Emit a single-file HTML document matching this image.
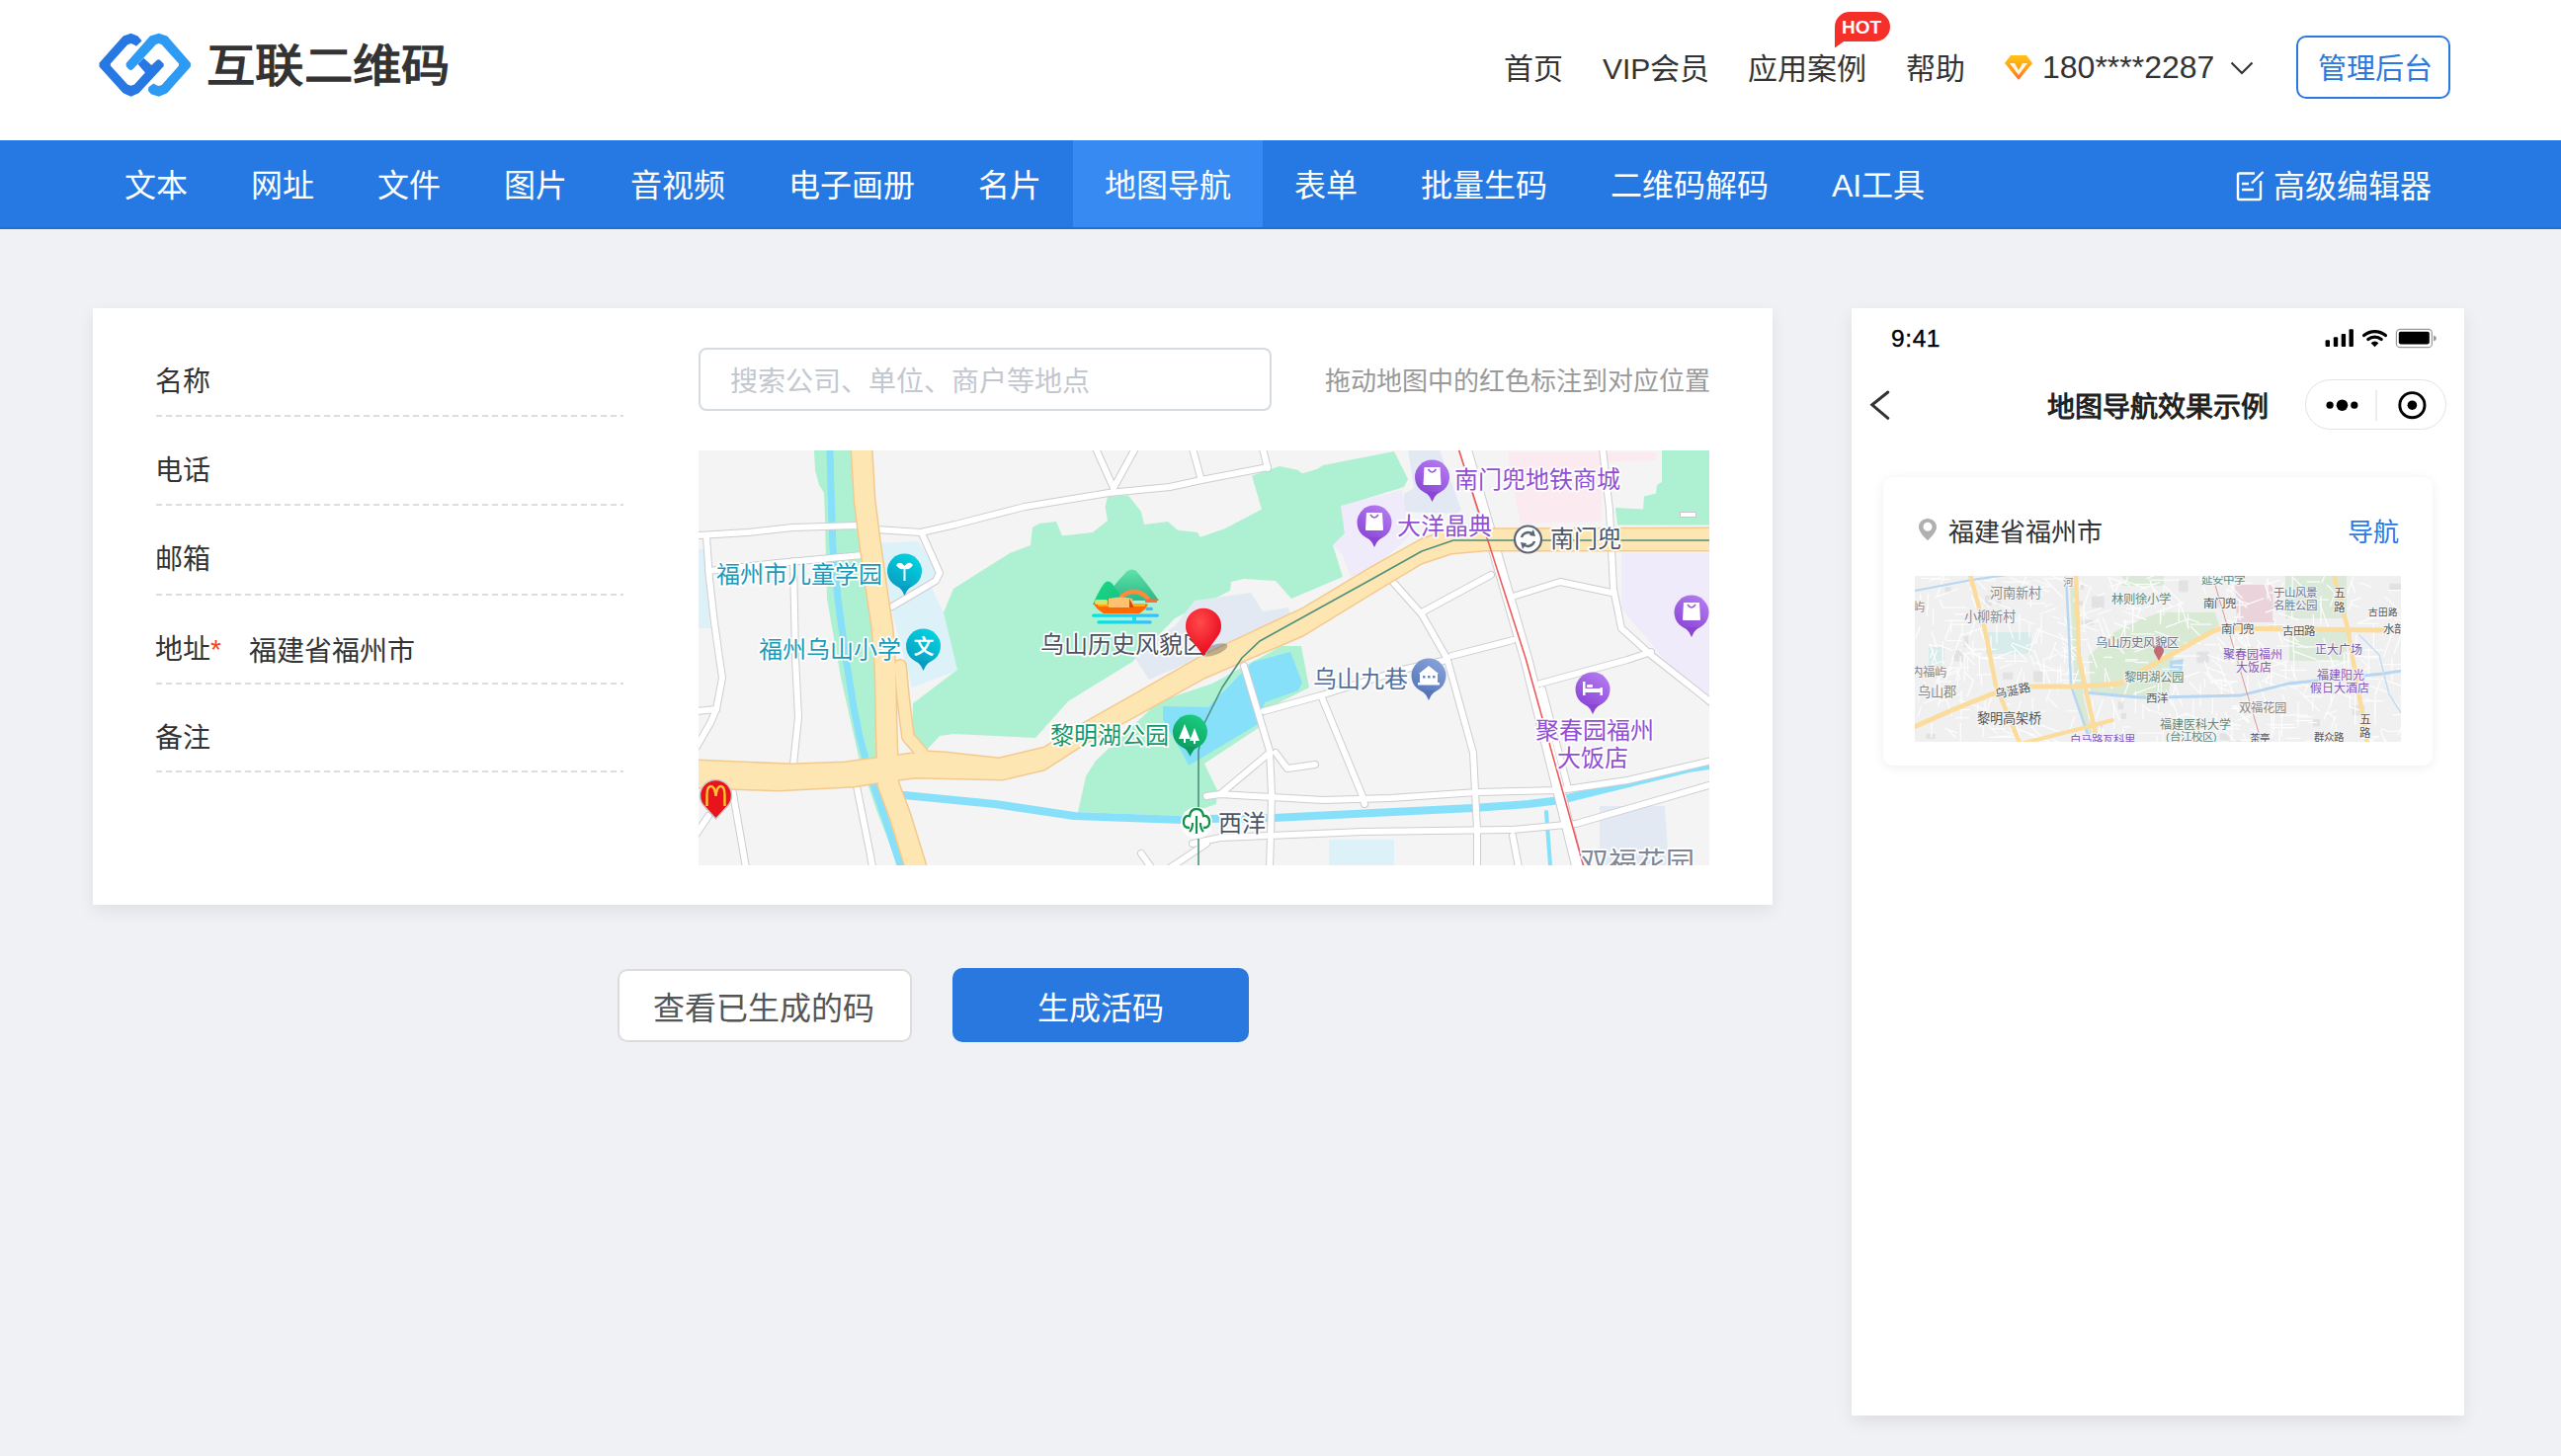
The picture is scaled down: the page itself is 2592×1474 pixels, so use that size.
<!DOCTYPE html>
<html lang="zh-CN">
<head>
<meta charset="utf-8">
<style>
*{margin:0;padding:0;box-sizing:border-box}
html,body{width:2592px;height:1474px;overflow:hidden}
body{background:#f0f1f4;font-family:"Liberation Sans",sans-serif;color:#333;position:relative}
.a{position:absolute;white-space:nowrap;line-height:1}
#hdr{position:absolute;left:0;top:0;width:2592px;height:142px;background:#fff}
#nav{position:absolute;left:0;top:142px;width:2592px;height:90px;background:#2679e2;border-bottom:2px solid #1f6fd8;box-sizing:content-box;height:88px}
.ni{position:absolute;top:0;height:88px;line-height:93px;font-size:32px;color:#fff;padding:0 32px}
.ni.on{background:#368af2}
.tn{font-size:30px;color:#333;top:55px}
#card{position:absolute;left:94px;top:312px;width:1700px;height:604px;background:#fff;box-shadow:0 6px 16px rgba(0,0,0,0.07)}
.lbl{font-size:28px;color:#333}
.dl{position:absolute;left:158px;width:473px;height:2px;background-image:linear-gradient(to right,#dcdcdc 0,#dcdcdc 6px,transparent 6px);background-size:10px 2px}
#phone{position:absolute;left:1874px;top:312px;width:620px;height:1121px;background:#fff;box-shadow:0 6px 16px rgba(0,0,0,0.08)}
</style>
</head>
<body>
<div id="hdr">
  <svg class="a" style="left:96px;top:30px" width="102" height="72" viewBox="0 0 2063 1456">
    <path fill="#2878e3" d="M940,200 L880,130 L740,75 L580,130 L90,680 L90,760 L580,1300 L740,1370 L900,1300 L1410,750 L1410,700 L1320,610 L1280,615 L1160,730 L1000,580 L880,710 L1030,880 L810,1120 L740,1150 L670,1120 L320,740 L320,700 L670,310 L740,285 L800,310 L850,340 L960,230 Z"/>
    <path fill="#2d9af3" d="M1100,1180 L1200,1100 L1260,1140 L1310,1155 L1370,1130 L1720,740 L1720,700 L1370,310 L1310,285 L1250,305 L1000,575 L780,810 L740,835 L690,810 L640,750 L640,690 L1130,130 L1310,75 L1480,130 L1960,680 L1960,760 L1480,1300 L1310,1370 L1150,1320 L1090,1250 Z"/>
  </svg>
  <div class="a" style="left:209px;top:45px;font-size:45px;font-weight:bold;color:#333;transform:scaleX(1.095);transform-origin:0 0">互联二维码</div>

  <div class="a tn" style="left:1522px">首页</div>
  <div class="a tn" style="left:1622px">VIP会员</div>
  <div class="a tn" style="left:1769px">应用案例</div>
  <svg class="a" style="left:1857px;top:12px" width="56" height="37" viewBox="0 0 56 37">
    <path fill="#f5302a" d="M0,15 A15,15 0 0 1 15,0 H41 A15,15 0 0 1 56,15 A15,15 0 0 1 41,30 H9 L0,36.5 Z"/>
  </svg>
  <div class="a" style="left:1864px;top:18px;font-size:19px;color:#fff;font-weight:bold">HOT</div>
  <div class="a tn" style="left:1929px">帮助</div>
  <svg class="a" style="left:2029px;top:56px" width="28" height="26" viewBox="0 0 28 26">
    <defs><linearGradient id="gd" x1="0" y1="0" x2="0" y2="1"><stop offset="0" stop-color="#ffc21a"/><stop offset="0.6" stop-color="#ff9a10"/><stop offset="1" stop-color="#ff6a2a"/></linearGradient></defs>
    <path fill="url(#gd)" d="M6,0 H22 L28,8 L14,25 L0,8 Z"/>
    <path fill="#fff" opacity="0.9" d="M5,8 H10 L14,15 L18,8 H23 L14,20 Z"/>
  </svg>
  <div class="a" style="left:2067px;top:52px;font-size:32px;color:#333">180****2287</div>
  <svg class="a" style="left:2257px;top:62px" width="24" height="14" viewBox="0 0 24 14">
    <path d="M1.5,1.5 L12,12 L22.5,1.5" fill="none" stroke="#333" stroke-width="2.2"/>
  </svg>
  <div class="a" style="left:2324px;top:36px;width:156px;height:64px;border:2px solid #2a78e0;border-radius:10px"></div>
  <div class="a" style="left:2346px;top:56px;font-size:29px;color:#2a78e0">管理后台</div>
</div>

<div id="nav">
  <div class="ni a" style="left:94px">文本</div>
  <div class="ni a" style="left:222px">网址</div>
  <div class="ni a" style="left:350px">文件</div>
  <div class="ni a" style="left:478px">图片</div>
  <div class="ni a" style="left:606px">音视频</div>
  <div class="ni a" style="left:766px">电子画册</div>
  <div class="ni a" style="left:958px">名片</div>
  <div class="ni a on" style="left:1086px">地图导航</div>
  <div class="ni a" style="left:1278px">表单</div>
  <div class="ni a" style="left:1406px">批量生码</div>
  <div class="ni a" style="left:1598px">二维码解码</div>
  <div class="ni a" style="left:1822px">AI工具</div>
  <svg class="a" style="left:2262px;top:30px" width="30" height="32" viewBox="0 0 30 32">
    <path d="M20,3.5 H4.5 Q3,3.5 3,5 V28.5 Q3,30 4.5,30 H24.5 Q26,30 26,28.5 V11" fill="none" stroke="#fff" stroke-width="2.4"/>
    <path d="M17,13.5 L28.5,2" fill="none" stroke="#fff" stroke-width="2.4"/>
    <path d="M7,14 H14 M7,20 H19" fill="none" stroke="#fff" stroke-width="2.4"/>
  </svg>
  <div class="a" style="left:2301px;top:31px;font-size:32px;color:#fff">高级编辑器</div>
</div>

<div id="card"></div>
<!-- form -->
<div class="a lbl" style="left:157px;top:373px">名称</div>
<div class="dl" style="top:420px"></div>
<div class="a lbl" style="left:157px;top:463px">电话</div>
<div class="dl" style="top:510px"></div>
<div class="a lbl" style="left:157px;top:553px">邮箱</div>
<div class="dl" style="top:601px"></div>
<div class="a lbl" style="left:157px;top:644px">地址<span style="color:#f0441f">*</span></div>
<div class="a lbl" style="left:252px;top:646px">福建省福州市</div>
<div class="dl" style="top:691px"></div>
<div class="a lbl" style="left:157px;top:734px">备注</div>
<div class="dl" style="top:780px"></div>

<div class="a" style="left:707px;top:352px;width:580px;height:64px;border:2px solid #d6dae1;border-radius:8px;background:#fff"></div>
<div class="a" style="left:739px;top:373px;font-size:28px;color:#c3c7cf">搜索公司、单位、商户等地点</div>
<div class="a" style="left:1341px;top:373px;font-size:26px;color:#999">拖动地图中的红色标注到对应位置</div>

<div id="map" class="a" style="left:707px;top:456px;width:1023px;height:420px;background:#f4f4f4;overflow:hidden">
<svg width="1023" height="420" viewBox="0 0 1023 420" style="position:absolute;left:0;top:0">
<rect width="1023" height="420" fill="#f4f4f4"/>
<polygon points="0,100 6,100 12,180 0,180" fill="#dcf2f8" />
<polygon points="117,0 172,0 186,150 200,330 225,420 202,420 180,364 162,310 144,230 130,150 128,70 127,43 122,35 118,20" fill="#aef0d2" />
<polygon points="183,94 222,92 244,124 236,140 248,164 264,222 216,240 196,164" fill="#dcf2f8" />
<polygon points="258,140 315,104 336,96 338,78 345,74 362,72 368,86.5 399,83 414,71 411.5,57 414,47 435,45.5 448,62 451,75 475,72 485,80.7 505,83 507.5,87.7 532,79.5 570,59.6 560,25.6 588,16 606,19.8 611,23.3 626,19 632,15 704,1 718,29 714,37 652,56 654,84 642,96 652,128 600,150 584,132 552,130 539,133 538,142 482,170 439,214 374,254 341,291 258,287 244,289 232,302 216,304 217,256 262,222 248,164" fill="#aef0d2" />
<polygon points="439,206 482,178 502,152 559,144 571,163 597,159 600,170 456,232" fill="#e3e9f3" />
<polygon points="718,0 750,0 772,60 768,64 714,62 714,44 724,38" fill="#e3e9f3" />
<polygon points="650,56 712,40 720,86 684,120 660,128 652,106 642,96 654,84" fill="#efebfa" />
<polygon points="820,2 970,2 968,10 914,12 914,72 832,74 820,16" fill="#fbeaf0" />
<polygon points="975,0 1024,0 1024,75.4 930,75.4 928,58 956,59.4 957,46.5 969,43.5 970,35 975,32" fill="#aef0d2" />
<rect x="993.5" y="62.5" width="16" height="5" fill="#fff" stroke="#c8c8cc" stroke-width="1"/>
<polygon points="934,104 1024,104 1024,262 978,212 934,160" fill="#efebfa" />
<polygon points="912,360 978,360 982,420 912,420" fill="#e3e9f3" />
<polygon points="638,394 704,394 704,420 638,420" fill="#dcf2f8" />
<polygon points="402,314 466,254 520,236 590,198 610,198 618,240 574,262 568,280 512,317 525,344 524,358 490,370 384,366 392,330" fill="#aef0d2" />
<polygon points="470,259 516,260 549,226 561,214 599,204 611,235 607,243 573,255 568,276 496,319 490,307 470,273" fill="#86e0fa" />
<polyline points="133,0 134,40 136,100 141,150 149,210 157,260 163,290 174,330 188,370 204,420" fill="none" stroke="#86e0fa" stroke-width="7" stroke-linejoin="round" stroke-linecap="round" />
<polyline points="208,349 300,358 380,370 490,374 512,373 582,372 784,362 840,358 872,354 1002,322 1030,318" fill="none" stroke="#86e0fa" stroke-width="8" stroke-linejoin="round" stroke-linecap="round" />
<polyline points="858,366 862,420" fill="none" stroke="#86e0fa" stroke-width="4" stroke-linejoin="round" stroke-linecap="round" />
<polyline points="0,86 50,83 95,78 160,76 180,80 225,83 260,75 330,57 415,43 477,37 509,30 576,17" fill="none" stroke="#cdcdd2" stroke-width="8" stroke-linejoin="round" stroke-linecap="round" />
<polyline points="571,-2 576,18" fill="none" stroke="#cdcdd2" stroke-width="8" stroke-linejoin="round" stroke-linecap="round" />
<polyline points="402,-2 420,38" fill="none" stroke="#cdcdd2" stroke-width="8" stroke-linejoin="round" stroke-linecap="round" />
<polyline points="442,-2 420,38" fill="none" stroke="#cdcdd2" stroke-width="8" stroke-linejoin="round" stroke-linecap="round" />
<polyline points="500,-2 508,27" fill="none" stroke="#cdcdd2" stroke-width="8" stroke-linejoin="round" stroke-linecap="round" />
<polyline points="226,84 244,124 240,132 196,158" fill="none" stroke="#cdcdd2" stroke-width="8" stroke-linejoin="round" stroke-linecap="round" />
<polyline points="8,88 11,130 16,174 21,210 24,230 18,262 12,276 -2,300" fill="none" stroke="#cdcdd2" stroke-width="8" stroke-linejoin="round" stroke-linecap="round" />
<polyline points="-2,264 18,262" fill="none" stroke="#cdcdd2" stroke-width="8" stroke-linejoin="round" stroke-linecap="round" />
<polyline points="96,112 98,210 101,270 96,318" fill="none" stroke="#cdcdd2" stroke-width="8" stroke-linejoin="round" stroke-linecap="round" />
<polyline points="10,122 80,114 166,106" fill="none" stroke="#cdcdd2" stroke-width="8" stroke-linejoin="round" stroke-linecap="round" />
<polyline points="-2,388 10,370" fill="none" stroke="#cdcdd2" stroke-width="8" stroke-linejoin="round" stroke-linecap="round" />
<polyline points="34,342 48,422" fill="none" stroke="#cdcdd2" stroke-width="8" stroke-linejoin="round" stroke-linecap="round" />
<polyline points="160,340 174,410 176,422" fill="none" stroke="#cdcdd2" stroke-width="8" stroke-linejoin="round" stroke-linecap="round" />
<polyline points="448,408 458,422" fill="none" stroke="#cdcdd2" stroke-width="8" stroke-linejoin="round" stroke-linecap="round" />
<polyline points="478,422 514,398" fill="none" stroke="#cdcdd2" stroke-width="8" stroke-linejoin="round" stroke-linecap="round" />
<polyline points="552,218 578,304 580,348 579,392 578,422" fill="none" stroke="#cdcdd2" stroke-width="8" stroke-linejoin="round" stroke-linecap="round" />
<polyline points="572,264 630,248 712,222 758,212" fill="none" stroke="#cdcdd2" stroke-width="8" stroke-linejoin="round" stroke-linecap="round" />
<polyline points="630,248 672,350 674,358" fill="none" stroke="#cdcdd2" stroke-width="8" stroke-linejoin="round" stroke-linecap="round" />
<polyline points="758,212 784,306 788,384 788,422" fill="none" stroke="#cdcdd2" stroke-width="8" stroke-linejoin="round" stroke-linecap="round" />
<polyline points="514,350 528,348 632,354 700,352 788,346 872,344 940,334 1026,314" fill="none" stroke="#cdcdd2" stroke-width="8" stroke-linejoin="round" stroke-linecap="round" />
<polyline points="500,398 528,392 578,390 672,386 824,384 888,378 1026,338" fill="none" stroke="#cdcdd2" stroke-width="8" stroke-linejoin="round" stroke-linecap="round" />
<polyline points="528,348 578,306" fill="none" stroke="#cdcdd2" stroke-width="8" stroke-linejoin="round" stroke-linecap="round" />
<polyline points="584,306 596,322 624,318" fill="none" stroke="#cdcdd2" stroke-width="8" stroke-linejoin="round" stroke-linecap="round" />
<polyline points="852,236 940,212 964,204" fill="none" stroke="#cdcdd2" stroke-width="8" stroke-linejoin="round" stroke-linecap="round" />
<polyline points="854,242 880,342" fill="none" stroke="#cdcdd2" stroke-width="8" stroke-linejoin="round" stroke-linecap="round" />
<polyline points="824,390 830,422" fill="none" stroke="#cdcdd2" stroke-width="8" stroke-linejoin="round" stroke-linecap="round" />
<polyline points="915,-2 922,60 926,140 934,180 964,207 1026,256" fill="none" stroke="#cdcdd2" stroke-width="8" stroke-linejoin="round" stroke-linecap="round" />
<polyline points="700,130 732,166 756,208" fill="none" stroke="#cdcdd2" stroke-width="8" stroke-linejoin="round" stroke-linecap="round" />
<polyline points="732,164 802,126" fill="none" stroke="#cdcdd2" stroke-width="8" stroke-linejoin="round" stroke-linecap="round" />
<polyline points="824,148 872,133 924,144" fill="none" stroke="#cdcdd2" stroke-width="8" stroke-linejoin="round" stroke-linecap="round" />
<polyline points="762,208 824,192" fill="none" stroke="#cdcdd2" stroke-width="8" stroke-linejoin="round" stroke-linecap="round" />
<polyline points="776,-2 838,212 890,422" fill="none" stroke="#cdcdd2" stroke-width="13" stroke-linejoin="round" stroke-linecap="round" />
<polyline points="0,86 50,83 95,78 160,76 180,80 225,83 260,75 330,57 415,43 477,37 509,30 576,17" fill="none" stroke="#ffffff" stroke-width="6" stroke-linejoin="round" stroke-linecap="round" />
<polyline points="571,-2 576,18" fill="none" stroke="#ffffff" stroke-width="6" stroke-linejoin="round" stroke-linecap="round" />
<polyline points="402,-2 420,38" fill="none" stroke="#ffffff" stroke-width="6" stroke-linejoin="round" stroke-linecap="round" />
<polyline points="442,-2 420,38" fill="none" stroke="#ffffff" stroke-width="6" stroke-linejoin="round" stroke-linecap="round" />
<polyline points="500,-2 508,27" fill="none" stroke="#ffffff" stroke-width="6" stroke-linejoin="round" stroke-linecap="round" />
<polyline points="226,84 244,124 240,132 196,158" fill="none" stroke="#ffffff" stroke-width="6" stroke-linejoin="round" stroke-linecap="round" />
<polyline points="8,88 11,130 16,174 21,210 24,230 18,262 12,276 -2,300" fill="none" stroke="#ffffff" stroke-width="6" stroke-linejoin="round" stroke-linecap="round" />
<polyline points="-2,264 18,262" fill="none" stroke="#ffffff" stroke-width="6" stroke-linejoin="round" stroke-linecap="round" />
<polyline points="96,112 98,210 101,270 96,318" fill="none" stroke="#ffffff" stroke-width="6" stroke-linejoin="round" stroke-linecap="round" />
<polyline points="10,122 80,114 166,106" fill="none" stroke="#ffffff" stroke-width="6" stroke-linejoin="round" stroke-linecap="round" />
<polyline points="-2,388 10,370" fill="none" stroke="#ffffff" stroke-width="6" stroke-linejoin="round" stroke-linecap="round" />
<polyline points="34,342 48,422" fill="none" stroke="#ffffff" stroke-width="6" stroke-linejoin="round" stroke-linecap="round" />
<polyline points="160,340 174,410 176,422" fill="none" stroke="#ffffff" stroke-width="6" stroke-linejoin="round" stroke-linecap="round" />
<polyline points="448,408 458,422" fill="none" stroke="#ffffff" stroke-width="6" stroke-linejoin="round" stroke-linecap="round" />
<polyline points="478,422 514,398" fill="none" stroke="#ffffff" stroke-width="6" stroke-linejoin="round" stroke-linecap="round" />
<polyline points="552,218 578,304 580,348 579,392 578,422" fill="none" stroke="#ffffff" stroke-width="6" stroke-linejoin="round" stroke-linecap="round" />
<polyline points="572,264 630,248 712,222 758,212" fill="none" stroke="#ffffff" stroke-width="6" stroke-linejoin="round" stroke-linecap="round" />
<polyline points="630,248 672,350 674,358" fill="none" stroke="#ffffff" stroke-width="6" stroke-linejoin="round" stroke-linecap="round" />
<polyline points="758,212 784,306 788,384 788,422" fill="none" stroke="#ffffff" stroke-width="6" stroke-linejoin="round" stroke-linecap="round" />
<polyline points="514,350 528,348 632,354 700,352 788,346 872,344 940,334 1026,314" fill="none" stroke="#ffffff" stroke-width="6" stroke-linejoin="round" stroke-linecap="round" />
<polyline points="500,398 528,392 578,390 672,386 824,384 888,378 1026,338" fill="none" stroke="#ffffff" stroke-width="6" stroke-linejoin="round" stroke-linecap="round" />
<polyline points="528,348 578,306" fill="none" stroke="#ffffff" stroke-width="6" stroke-linejoin="round" stroke-linecap="round" />
<polyline points="584,306 596,322 624,318" fill="none" stroke="#ffffff" stroke-width="6" stroke-linejoin="round" stroke-linecap="round" />
<polyline points="852,236 940,212 964,204" fill="none" stroke="#ffffff" stroke-width="6" stroke-linejoin="round" stroke-linecap="round" />
<polyline points="854,242 880,342" fill="none" stroke="#ffffff" stroke-width="6" stroke-linejoin="round" stroke-linecap="round" />
<polyline points="824,390 830,422" fill="none" stroke="#ffffff" stroke-width="6" stroke-linejoin="round" stroke-linecap="round" />
<polyline points="915,-2 922,60 926,140 934,180 964,207 1026,256" fill="none" stroke="#ffffff" stroke-width="6" stroke-linejoin="round" stroke-linecap="round" />
<polyline points="700,130 732,166 756,208" fill="none" stroke="#ffffff" stroke-width="6" stroke-linejoin="round" stroke-linecap="round" />
<polyline points="732,164 802,126" fill="none" stroke="#ffffff" stroke-width="6" stroke-linejoin="round" stroke-linecap="round" />
<polyline points="824,148 872,133 924,144" fill="none" stroke="#ffffff" stroke-width="6" stroke-linejoin="round" stroke-linecap="round" />
<polyline points="762,208 824,192" fill="none" stroke="#ffffff" stroke-width="6" stroke-linejoin="round" stroke-linecap="round" />
<polyline points="776,-2 838,212 890,422" fill="none" stroke="#ffffff" stroke-width="11" stroke-linejoin="round" stroke-linecap="round" />
<polyline points="165,-2 168,50 173,90 180,140 186,180 189,221 190,280 192,338 204,370 220,422" fill="none" stroke="#f4c98e" stroke-width="23" stroke-linejoin="round" stroke-linecap="round" />
<polyline points="204,218 207,250 212,290 226,306" fill="none" stroke="#f4c98e" stroke-width="14" stroke-linejoin="round" stroke-linecap="round" />
<polygon points="-2,314 94,318 148,316 184,311 232,305 250,306 304,312 350,301 380,282 440,248 512,207 612,160 682,118 732,90 762,80 1026,79 1026,101 796,101 762,104 732,114 692,138 612,187 512,230 440,270 392,296 350,323 308,333 220,331 188,335 158,340 80,344 -2,341" fill="#fee6b3" stroke="#f4c98e" stroke-width="3" stroke-linejoin="round"/>
<polyline points="165,-2 168,50 173,90 180,140 186,180 189,221 190,280 192,338 204,370 220,422" fill="none" stroke="#fee6b3" stroke-width="20" stroke-linejoin="round" stroke-linecap="round" />
<polyline points="204,218 207,250 212,290 226,306" fill="none" stroke="#fee6b3" stroke-width="11" stroke-linejoin="round" stroke-linecap="round" />
<polygon points="-2,314 94,318 148,316 184,311 232,305 250,306 304,312 350,301 380,282 440,248 512,207 612,160 682,118 732,90 762,80 1026,79 1026,101 796,101 762,104 732,114 692,138 612,187 512,230 440,270 392,296 350,323 308,333 220,331 188,335 158,340 80,344 -2,341" fill="#fee6b3" />
<polyline points="769,-2 837,210 896,422" fill="none" stroke="#ee5a5a" stroke-width="1.6" stroke-linejoin="round" stroke-linecap="round" />
<polyline points="1026,91 764,91 732,102 682,130 568,193 550,210 530,240 512,276 506,304 506,422" fill="none" stroke="#4f8f7c" stroke-width="1.6" stroke-linejoin="round" stroke-linecap="round" />
<g font-family="Liberation Sans,sans-serif">
<text x="18" y="134" font-size="24" fill="#1a9ab9" stroke="#fff" stroke-width="3.5" stroke-linejoin="round" paint-order="stroke" >福州市儿童学园</text>
<text x="61" y="210" font-size="24" fill="#1a9ab9" stroke="#fff" stroke-width="3.5" stroke-linejoin="round" paint-order="stroke" >福州乌山小学</text>
<text x="346" y="205" font-size="24" fill="#4b5262" stroke="#fff" stroke-width="3.5" stroke-linejoin="round" paint-order="stroke" >乌山历史风貌区</text>
<text x="356" y="297" font-size="24" fill="#16976a" stroke="#fff" stroke-width="3.5" stroke-linejoin="round" paint-order="stroke" >黎明湖公园</text>
<text x="765" y="38" font-size="24" fill="#9150d4" stroke="#fff" stroke-width="3.5" stroke-linejoin="round" paint-order="stroke" >南门兜地铁商城</text>
<text x="707" y="85" font-size="24" fill="#9150d4" stroke="#fff" stroke-width="3.5" stroke-linejoin="round" paint-order="stroke" >大洋晶典</text>
<text x="862" y="98" font-size="24" fill="#4e5566" stroke="#fff" stroke-width="3.5" stroke-linejoin="round" paint-order="stroke" >南门兜</text>
<text x="622" y="240" font-size="24" fill="#54709c" stroke="#fff" stroke-width="3.5" stroke-linejoin="round" paint-order="stroke" >乌山九巷</text>
<text x="847" y="292" font-size="24" fill="#9150d4" stroke="#fff" stroke-width="3.5" stroke-linejoin="round" paint-order="stroke" >聚春园福州</text>
<text x="869" y="320" font-size="24" fill="#9150d4" stroke="#fff" stroke-width="3.5" stroke-linejoin="round" paint-order="stroke" >大饭店</text>
<text x="526" y="386" font-size="24" fill="#4e5566" stroke="#fff" stroke-width="3.5" stroke-linejoin="round" paint-order="stroke" >西洋</text>
<text x="892" y="428" font-size="29" fill="#7d8696" stroke="#fff" stroke-width="3.5" stroke-linejoin="round" paint-order="stroke" >双福花园</text>
</g>
<defs><linearGradient id="gt1" x1="0.8" y1="0" x2="0.2" y2="1"><stop offset="0" stop-color="#00d6e2"/><stop offset="1" stop-color="#0a9cc0"/></linearGradient></defs><circle cx="208.5" cy="122" r="17.5" fill="url(#gt1)"/><path d="M201.5,137.0 Q206.5,141.5 208.5,147.0 Q210.5,141.5 215.5,137.0 Z" fill="#0a9cc0"/><path d="M200,116 Q204,111 208.5,117 Q213,111 217,116 Q214,121 209.5,120 V132 H207.5 V120 Q203,121 200,116 Z" fill="#fff"/>
<defs><linearGradient id="gt2" x1="0.8" y1="0" x2="0.2" y2="1"><stop offset="0" stop-color="#00d6e2"/><stop offset="1" stop-color="#0a9cc0"/></linearGradient></defs><circle cx="227.5" cy="198" r="17.5" fill="url(#gt2)"/><path d="M220.5,213.0 Q225.5,217.5 227.5,223.0 Q229.5,217.5 234.5,213.0 Z" fill="#0a9cc0"/><text x="227.5" y="206" font-size="20" font-weight="bold" fill="#fff" text-anchor="middle" font-family="Liberation Sans,sans-serif">文</text>
<defs><linearGradient id="gg1" x1="0.8" y1="0" x2="0.2" y2="1"><stop offset="0" stop-color="#19cf80"/><stop offset="1" stop-color="#0d9a5e"/></linearGradient></defs><circle cx="497.5" cy="285" r="17.5" fill="url(#gg1)"/><path d="M490.5,300.0 Q495.5,304.5 497.5,310.0 Q499.5,304.5 504.5,300.0 Z" fill="#0d9a5e"/><path d="M492,277 L486,292 H498 Z M502,281 L497,294 H507 Z" fill="#fff"/><rect x="491" y="292" width="2" height="4" fill="#fff"/><rect x="501" y="294" width="2" height="3" fill="#fff"/>
<defs><linearGradient id="gp1" x1="0.8" y1="0" x2="0.2" y2="1"><stop offset="0" stop-color="#b47cf0"/><stop offset="1" stop-color="#8a45d6"/></linearGradient></defs><circle cx="742.5" cy="27" r="17.5" fill="url(#gp1)"/><path d="M735.5,42.0 Q740.5,46.5 742.5,52.0 Q744.5,46.5 749.5,42.0 Z" fill="#8a45d6"/><path d="M734.5,17 H750.5 L751.5,34 Q751.5,35 750.5,35 H734.5 Q733.5,35 733.5,34 Z" fill="#fff"/><path d="M738.5,19 Q742.5,25 746.5,19" fill="none" stroke="#9a5ad8" stroke-width="1.6"/>
<defs><linearGradient id="gp2" x1="0.8" y1="0" x2="0.2" y2="1"><stop offset="0" stop-color="#b47cf0"/><stop offset="1" stop-color="#8a45d6"/></linearGradient></defs><circle cx="684" cy="73" r="17.5" fill="url(#gp2)"/><path d="M677,88.0 Q682,92.5 684,98.0 Q686,92.5 691,88.0 Z" fill="#8a45d6"/><path d="M676,63 H692 L693,80 Q693,81 692,81 H676 Q675,81 675,80 Z" fill="#fff"/><path d="M680,65 Q684,71 688,65" fill="none" stroke="#9a5ad8" stroke-width="1.6"/>
<defs><linearGradient id="gp3" x1="0.8" y1="0" x2="0.2" y2="1"><stop offset="0" stop-color="#b47cf0"/><stop offset="1" stop-color="#8a45d6"/></linearGradient></defs><circle cx="1005" cy="164" r="17.5" fill="url(#gp3)"/><path d="M998,179.0 Q1003,183.5 1005,189.0 Q1007,183.5 1012,179.0 Z" fill="#8a45d6"/><path d="M997,154 H1013 L1014,171 Q1014,172 1013,172 H997 Q996,172 996,171 Z" fill="#fff"/><path d="M1001,156 Q1005,162 1009,156" fill="none" stroke="#9a5ad8" stroke-width="1.6"/>
<defs><linearGradient id="gb1" x1="0.8" y1="0" x2="0.2" y2="1"><stop offset="0" stop-color="#88a4dc"/><stop offset="1" stop-color="#5676b8"/></linearGradient></defs><circle cx="739" cy="228" r="17.5" fill="url(#gb1)"/><path d="M732,243.0 Q737,247.5 739,253.0 Q741,247.5 746,243.0 Z" fill="#5676b8"/><path d="M729,226 L739,218 L749,226 Z" fill="#fff"/><rect x="730" y="226" width="18" height="9" fill="#fff"/><rect x="733" y="228" width="2.5" height="2.5" fill="#6c8ac8"/><rect x="738" y="228" width="2.5" height="2.5" fill="#6c8ac8"/><rect x="743" y="228" width="2.5" height="2.5" fill="#6c8ac8"/><rect x="728" y="235" width="22" height="2.5" fill="#fff"/>
<defs><linearGradient id="gp4" x1="0.8" y1="0" x2="0.2" y2="1"><stop offset="0" stop-color="#b47cf0"/><stop offset="1" stop-color="#8a45d6"/></linearGradient></defs><circle cx="905" cy="242" r="17.5" fill="url(#gp4)"/><path d="M898,257.0 Q903,261.5 905,267.0 Q907,261.5 912,257.0 Z" fill="#8a45d6"/><rect x="895" y="234" width="2.5" height="14" fill="#fff"/><rect x="912.5" y="240" width="2.5" height="8" fill="#fff"/><rect x="895" y="241" width="20" height="4" fill="#fff"/><rect x="899" y="237" width="6" height="3" rx="1" fill="#fff"/>
<path d="M6.5,361 A16,16 0 1 1 28.5,361 L17.5,373 Z" fill="#e8141b" stroke="#c8c8cc" stroke-width="1.5"/>
<path d="M8.5,360 V349 Q8.5,340 12.5,340 Q16.5,340 17.5,350 Q18.5,340 22.5,340 Q26.5,340 26.5,349 V360" fill="none" stroke="#ffc72c" stroke-width="2.4"/>
<circle cx="839.5" cy="90" r="13.5" fill="#fff" stroke="#5d6578" stroke-width="2.2"/>
<path d="M833,88 A7,7 0 0 1 845,85.5" fill="none" stroke="#5d6578" stroke-width="2.4"/><path d="M846,92 A7,7 0 0 1 834,94.5" fill="none" stroke="#5d6578" stroke-width="2.4"/><path d="M845,80 L847,87 L841,86 Z M834,100 L832,93 L838,94 Z" fill="#5d6578"/>
<circle cx="504" cy="377" r="16" fill="#fff"/>
<path d="M497,382 Q490,382 491,375 Q492,369 497,370 Q498,363 504,363 Q510,363 511,370 Q516,369 517,375 Q518,382 511,382" fill="none" stroke="#14934d" stroke-width="2.4"/><path d="M504,370 V388 M500,377 Q500,383 497,386 M508,377 Q508,383 511,386" fill="none" stroke="#14934d" stroke-width="2.2"/>
<defs><linearGradient id="mt1" x1="0" y1="0" x2="0" y2="1"><stop offset="0" stop-color="#5fe3a8"/><stop offset="1" stop-color="#2bb88a"/></linearGradient><linearGradient id="mt2" x1="0" y1="0" x2="0" y2="1"><stop offset="0" stop-color="#ffc36a"/><stop offset="1" stop-color="#ff7a28"/></linearGradient></defs>
<defs><linearGradient id="mt3" x1="0" y1="0" x2="1" y2="1"><stop offset="0" stop-color="#12e07c"/><stop offset="1" stop-color="#1fb98a"/></linearGradient><linearGradient id="wt" x1="0" y1="0" x2="1" y2="0"><stop offset="0" stop-color="#00e6e0"/><stop offset="1" stop-color="#3cbcff"/></linearGradient></defs>
<path d="M418,140 Q428,128 434,122 Q438.5,119 443,122 Q452,132 466,152 H418 Z" fill="url(#mt1)"/>
<path d="M399,156 Q406,140 411,134 Q414.4,131 418,134 Q424,142 429,150 L429,156 Z" fill="url(#mt3)"/>
<path d="M427,149 Q442,136 456,151" fill="none" stroke="#ff8a3a" stroke-width="4.5"/><rect x="452" y="150.5" width="12" height="3.5" fill="#ff6a3a"/>
<path d="M400,155.5 H455 Q452,162 446,165 H410 Q403,161 400,155.5 Z" fill="#ff6a00"/><rect x="404" y="155.5" width="48" height="2.5" fill="#ffb000"/>
<path d="M415,159 V150 Q427,147 439,150 L441,159 Z" fill="#ffc070"/><path d="M436,150 L441,159 H436 Z" fill="#d84a00"/>
<rect x="401" y="151" width="13" height="5" rx="2" fill="#d8e070"/>
<rect x="398" y="165.4" width="68" height="3.4" rx="1.7" fill="url(#wt)"/><rect x="403.4" y="172.2" width="55.3" height="3.3" rx="1.6" fill="url(#wt)"/><rect x="452.4" y="158.7" width="7.6" height="3.3" rx="1.6" fill="#3cbcff"/><rect x="439" y="168" width="4" height="5" fill="#20d8f0"/>
<ellipse cx="522" cy="202" rx="14" ry="5" fill="#000" opacity="0.25" transform="rotate(-20 522 202)"/>
<defs><radialGradient id="rp" cx="0.4" cy="0.3" r="0.8"><stop offset="0" stop-color="#ff4a4a"/><stop offset="1" stop-color="#e6001a"/></radialGradient></defs>
<path d="M497,189 A18,18 0 1 1 525,189 L511,208 Z" fill="url(#rp)"/>
</svg>
</div>

<div class="a" style="left:625px;top:981px;width:298px;height:74px;border:2px solid #dcdcdc;border-radius:10px;background:#fff"></div>
<div class="a" style="left:661px;top:1005px;font-size:32px;color:#555">查看已生成的码</div>
<div class="a" style="left:964px;top:980px;width:300px;height:75px;border-radius:10px;background:#2878e0"></div>
<div class="a" style="left:1050px;top:1005px;font-size:32px;color:#fff">生成活码</div>

<div id="phone"></div>
<div class="a" style="left:1914px;top:331px;font-size:24.5px;color:#000;-webkit-text-stroke:0.35px #000;letter-spacing:0.6px">9:41</div>
<svg class="a" style="left:2350px;top:330px" width="130" height="25" viewBox="0 0 130 25">
  <rect x="3.6" y="14.3" width="4.4" height="6.8" rx="1" fill="#000"/>
  <rect x="11.8" y="11.3" width="4.4" height="9.8" rx="1" fill="#000"/>
  <rect x="19.7" y="8" width="4.4" height="13.1" rx="1" fill="#000"/>
  <rect x="27.5" y="3.3" width="4.4" height="17.8" rx="1" fill="#000"/>
  <path d="M42.6,9.6 A17,17 0 0 1 64.4,9.6" fill="none" stroke="#000" stroke-width="3.2" stroke-linecap="round"/>
  <path d="M46.8,13.6 A10.5,10.5 0 0 1 60.2,13.6" fill="none" stroke="#000" stroke-width="3.2" stroke-linecap="round"/>
  <path d="M49.6,17.2 L53.5,21.3 L57.4,17.2 Q53.5,14 49.6,17.2 Z" fill="#000"/>
  <rect x="75.4" y="3.3" width="36" height="18.4" rx="3.8" fill="none" stroke="#9a9a9a" stroke-width="1.2"/>
  <rect x="77.8" y="5.7" width="31" height="12.7" rx="1.8" fill="#000"/>
  <path d="M113,9.4 Q116,10.5 116,12.5 Q116,14.5 113,15.5 Z" fill="#9a9a9a"/>
</svg>
<svg class="a" style="left:1890px;top:392px" width="26" height="36" viewBox="0 0 26 36">
  <path d="M20.8,5 L4.8,17.8 L20.8,31.4" fill="none" stroke="#333" stroke-width="3" stroke-linecap="round" stroke-linejoin="miter"/>
</svg>
<div class="a" style="left:2072px;top:399px;font-size:28px;font-weight:bold;color:#222">地图导航效果示例</div>
<div class="a" style="left:2333px;top:384px;width:143px;height:51px;border:1.5px solid #e3e3e3;border-radius:26px;background:#fff"></div>
<svg class="a" style="left:2340px;top:384px" width="130" height="51" viewBox="0 0 130 51">
  <circle cx="18.1" cy="26.2" r="3.6" fill="#000"/>
  <circle cx="30.5" cy="26.2" r="5.8" fill="#000"/>
  <circle cx="42.8" cy="26.2" r="3.6" fill="#000"/>
  <rect x="64.3" y="11" width="1.5" height="31" fill="#e6e6e6"/>
  <circle cx="101.4" cy="26.2" r="12.6" fill="none" stroke="#000" stroke-width="2.9"/>
  <circle cx="101.4" cy="26.2" r="4.8" fill="#000"/>
</svg>
<div class="a" style="left:1906px;top:483px;width:556px;height:292px;background:#fff;border-radius:10px;box-shadow:0 2px 12px rgba(0,0,0,0.07)"></div>
<svg class="a" style="left:1940px;top:523px" width="22" height="26" viewBox="0 0 22 26">
  <path d="M11,1.9 C16,1.9 20,5.6 20,10.5 C20,15.5 14,21.5 11,24.2 C8,21.5 2,15.5 2,10.5 C2,5.6 6,1.9 11,1.9 Z M11,5.7 A4.5,4.5 0 1 0 11,14.7 A4.5,4.5 0 1 0 11,5.7 Z" fill="#b0b0b0" fill-rule="evenodd"/>
</svg>
<div class="a" style="left:1972px;top:526px;font-size:26px;color:#333">福建省福州市</div>
<div class="a" style="left:2376px;top:526px;font-size:26px;color:#2a7ae2">导航</div>
<div id="mini" class="a" style="left:1938px;top:583px;width:492px;height:168px;background:#f0f0f0;overflow:hidden">
<svg width="492" height="168" viewBox="0 0 492 168" style="position:absolute;left:0;top:0">
<rect width="492" height="168" fill="#f0f0f0"/>
<rect x="159.3" y="25.3" width="10.5" height="4.6" fill="#e2e2e4"/>
<rect x="263.7" y="61.4" width="4.6" height="8.1" fill="#e2e2e4"/>
<rect x="18.4" y="72.9" width="4.7" height="4.7" fill="#e2e2e4"/>
<rect x="208.9" y="138.9" width="5.2" height="5.8" fill="#e2e2e4"/>
<rect x="308.7" y="159.2" width="9.8" height="7.2" fill="#e2e2e4"/>
<rect x="480.3" y="7.8" width="12.6" height="6.3" fill="#e2e2e4"/>
<rect x="71.0" y="19.8" width="7.1" height="10.5" fill="#e2e2e4"/>
<rect x="88.9" y="97.7" width="10.4" height="7.0" fill="#e2e2e4"/>
<rect x="269.5" y="10.5" width="4.6" height="5.6" fill="#e2e2e4"/>
<rect x="334.8" y="71.8" width="7.1" height="8.7" fill="#e2e2e4"/>
<rect x="223.0" y="50.4" width="11.9" height="9.6" fill="#e2e2e4"/>
<rect x="120.1" y="96.5" width="9.3" height="11.0" fill="#e2e2e4"/>
<rect x="358.9" y="48.4" width="13.8" height="4.9" fill="#e2e2e4"/>
<rect x="205.7" y="127.2" width="5.5" height="7.9" fill="#e2e2e4"/>
<rect x="19.3" y="112.3" width="11.6" height="8.6" fill="#e2e2e4"/>
<rect x="430.7" y="52.7" width="11.0" height="8.8" fill="#e2e2e4"/>
<rect x="285.3" y="76.6" width="12.4" height="11.6" fill="#e2e2e4"/>
<rect x="233.3" y="111.6" width="4.6" height="9.6" fill="#e2e2e4"/>
<rect x="318.4" y="166.8" width="12.2" height="6.3" fill="#e2e2e4"/>
<rect x="189.8" y="112.3" width="4.2" height="7.7" fill="#e2e2e4"/>
<rect x="82.7" y="19.7" width="4.6" height="10.1" fill="#e2e2e4"/>
<rect x="63.6" y="41.6" width="7.9" height="11.0" fill="#e2e2e4"/>
<rect x="39.6" y="75.5" width="9.5" height="11.1" fill="#e2e2e4"/>
<rect x="403.1" y="145.1" width="6.8" height="7.3" fill="#e2e2e4"/>
<rect x="176.5" y="148.5" width="13.6" height="5.2" fill="#e2e2e4"/>
<rect x="86.7" y="39.0" width="6.3" height="7.9" fill="#e2e2e4"/>
<rect x="289.8" y="44.1" width="4.0" height="7.4" fill="#e2e2e4"/>
<rect x="181.7" y="95.1" width="13.5" height="9.5" fill="#e2e2e4"/>
<rect x="253.6" y="103.8" width="10.8" height="4.4" fill="#e2e2e4"/>
<rect x="442.6" y="131.0" width="12.7" height="10.4" fill="#e2e2e4"/>
<rect x="193.1" y="67.0" width="5.0" height="9.1" fill="#e2e2e4"/>
<rect x="30.6" y="11.3" width="6.1" height="5.3" fill="#e2e2e4"/>
<rect x="167.3" y="8.8" width="4.0" height="5.2" fill="#e2e2e4"/>
<rect x="49.9" y="61.1" width="4.3" height="11.0" fill="#e2e2e4"/>
<rect x="302.1" y="25.0" width="6.5" height="6.8" fill="#e2e2e4"/>
<rect x="179.2" y="20.6" width="12.5" height="11.9" fill="#e2e2e4"/>
<rect x="229.3" y="81.3" width="4.9" height="4.8" fill="#e2e2e4"/>
<rect x="168.6" y="44.5" width="12.3" height="5.3" fill="#e2e2e4"/>
<rect x="11.4" y="159.8" width="9.3" height="5.2" fill="#e2e2e4"/>
<rect x="267.2" y="4.5" width="9.3" height="11.8" fill="#e2e2e4"/>
<polygon points="176,81 202,57 226,45 248,37 304,37 308,50 262,80 256,128 178,117" fill="#d8e9d4" />
<polygon points="375,0 437,0 437,43 375,43" fill="#dbead8" />
<polygon points="210,-1 252,-1 252,10 210,10" fill="#dbead8" />
<polygon points="157,10 164,10 170,120 182,169 176,169 162,120" fill="#d8e9d4" />
<polygon points="379,55 437,55 437,86 379,86" fill="#dbead8" />
<polygon points="324,9 362,9 364,47 326,47" fill="#ead3da" />
<polygon points="72,57 118,57 118,79 72,79" fill="#d8ecec" />
<polygon points="14,72 30,72 30,95 14,95" fill="#d8ecec" />
<polygon points="258,86 272,84 270,100 258,100" fill="#b9d8f0" />
<line x1="424.8" y1="117.0" x2="443.0" y2="123.6" stroke="#fdfdfd" stroke-width="1.2"/>
<line x1="446.9" y1="59.8" x2="446.9" y2="79.5" stroke="#fdfdfd" stroke-width="1.2"/>
<line x1="383.3" y1="55.4" x2="383.3" y2="76.9" stroke="#fdfdfd" stroke-width="1.2"/>
<line x1="387.9" y1="127.4" x2="387.9" y2="153.1" stroke="#fdfdfd" stroke-width="1.2"/>
<line x1="402.6" y1="124.3" x2="402.6" y2="136.7" stroke="#fdfdfd" stroke-width="1.2"/>
<line x1="242.4" y1="122.8" x2="267.8" y2="122.8" stroke="#fdfdfd" stroke-width="1.2"/>
<line x1="232.3" y1="32.5" x2="249.1" y2="26.4" stroke="#fdfdfd" stroke-width="1.2"/>
<line x1="461.0" y1="166.0" x2="470.2" y2="162.6" stroke="#fdfdfd" stroke-width="1.2"/>
<line x1="50.3" y1="79.0" x2="62.0" y2="74.7" stroke="#fdfdfd" stroke-width="1.2"/>
<line x1="307.0" y1="151.3" x2="325.6" y2="151.3" stroke="#fdfdfd" stroke-width="1.2"/>
<line x1="321.3" y1="134.3" x2="347.6" y2="134.3" stroke="#fdfdfd" stroke-width="1.2"/>
<line x1="59.0" y1="65.3" x2="59.0" y2="83.8" stroke="#fdfdfd" stroke-width="1.2"/>
<line x1="87.8" y1="132.6" x2="97.1" y2="129.2" stroke="#fdfdfd" stroke-width="1.2"/>
<line x1="465.5" y1="121.3" x2="471.3" y2="105.5" stroke="#fdfdfd" stroke-width="1.2"/>
<line x1="465.8" y1="121.8" x2="465.8" y2="151.6" stroke="#fdfdfd" stroke-width="1.2"/>
<line x1="13.6" y1="99.3" x2="22.4" y2="75.1" stroke="#fdfdfd" stroke-width="1.2"/>
<line x1="71.9" y1="138.9" x2="79.6" y2="117.7" stroke="#fdfdfd" stroke-width="1.2"/>
<line x1="172.4" y1="92.2" x2="172.4" y2="100.6" stroke="#fdfdfd" stroke-width="1.2"/>
<line x1="393.3" y1="122.0" x2="412.9" y2="122.0" stroke="#fdfdfd" stroke-width="1.2"/>
<line x1="459.3" y1="72.9" x2="459.3" y2="99.1" stroke="#fdfdfd" stroke-width="1.2"/>
<line x1="103.8" y1="42.3" x2="121.7" y2="48.8" stroke="#fdfdfd" stroke-width="1.2"/>
<line x1="375.7" y1="54.8" x2="387.9" y2="66.9" stroke="#fdfdfd" stroke-width="1.2"/>
<line x1="64.5" y1="152.9" x2="90.6" y2="143.4" stroke="#fdfdfd" stroke-width="1.2"/>
<line x1="325.9" y1="136.9" x2="338.1" y2="149.1" stroke="#fdfdfd" stroke-width="1.2"/>
<line x1="451.5" y1="84.3" x2="459.5" y2="92.3" stroke="#fdfdfd" stroke-width="1.2"/>
<line x1="251.2" y1="146.6" x2="251.2" y2="168.0" stroke="#fdfdfd" stroke-width="1.2"/>
<line x1="381.8" y1="25.2" x2="381.8" y2="43.6" stroke="#fdfdfd" stroke-width="1.2"/>
<line x1="356.8" y1="93.5" x2="378.4" y2="85.6" stroke="#fdfdfd" stroke-width="1.2"/>
<line x1="261.1" y1="81.1" x2="288.5" y2="81.1" stroke="#fdfdfd" stroke-width="1.2"/>
<line x1="28.0" y1="32.1" x2="52.9" y2="32.1" stroke="#fdfdfd" stroke-width="1.2"/>
<line x1="249.8" y1="94.4" x2="267.5" y2="94.4" stroke="#fdfdfd" stroke-width="1.2"/>
<line x1="301.4" y1="84.9" x2="310.1" y2="93.7" stroke="#fdfdfd" stroke-width="1.2"/>
<line x1="136.4" y1="85.4" x2="142.9" y2="67.4" stroke="#fdfdfd" stroke-width="1.2"/>
<line x1="121.8" y1="87.9" x2="148.4" y2="97.6" stroke="#fdfdfd" stroke-width="1.2"/>
<line x1="439.2" y1="34.0" x2="443.0" y2="23.7" stroke="#fdfdfd" stroke-width="1.2"/>
<line x1="59.8" y1="74.3" x2="82.6" y2="74.3" stroke="#fdfdfd" stroke-width="1.2"/>
<line x1="210.7" y1="35.7" x2="234.5" y2="44.4" stroke="#fdfdfd" stroke-width="1.2"/>
<line x1="441.3" y1="25.9" x2="451.8" y2="22.1" stroke="#fdfdfd" stroke-width="1.2"/>
<line x1="434.4" y1="162.5" x2="434.4" y2="187.0" stroke="#fdfdfd" stroke-width="1.2"/>
<line x1="46.3" y1="148.7" x2="46.3" y2="178.4" stroke="#fdfdfd" stroke-width="1.2"/>
<line x1="409.6" y1="27.1" x2="419.8" y2="55.2" stroke="#fdfdfd" stroke-width="1.2"/>
<line x1="198.7" y1="70.8" x2="212.8" y2="65.6" stroke="#fdfdfd" stroke-width="1.2"/>
<line x1="355.3" y1="3.3" x2="368.1" y2="16.1" stroke="#fdfdfd" stroke-width="1.2"/>
<line x1="346.0" y1="64.6" x2="361.3" y2="79.9" stroke="#fdfdfd" stroke-width="1.2"/>
<line x1="252.0" y1="10.8" x2="252.0" y2="40.2" stroke="#fdfdfd" stroke-width="1.2"/>
<line x1="51.6" y1="44.6" x2="79.5" y2="44.6" stroke="#fdfdfd" stroke-width="1.2"/>
<line x1="89.3" y1="127.0" x2="98.5" y2="152.1" stroke="#fdfdfd" stroke-width="1.2"/>
<line x1="332.6" y1="158.9" x2="336.4" y2="169.5" stroke="#fdfdfd" stroke-width="1.2"/>
<line x1="452.2" y1="95.9" x2="461.6" y2="92.5" stroke="#fdfdfd" stroke-width="1.2"/>
<line x1="28.3" y1="115.6" x2="37.8" y2="141.6" stroke="#fdfdfd" stroke-width="1.2"/>
<line x1="132.3" y1="2.8" x2="157.9" y2="2.8" stroke="#fdfdfd" stroke-width="1.2"/>
<line x1="41.2" y1="143.8" x2="55.0" y2="143.8" stroke="#fdfdfd" stroke-width="1.2"/>
<line x1="59.9" y1="1.9" x2="72.0" y2="14.1" stroke="#fdfdfd" stroke-width="1.2"/>
<line x1="450.4" y1="104.4" x2="470.0" y2="104.4" stroke="#fdfdfd" stroke-width="1.2"/>
<line x1="117.3" y1="18.4" x2="117.3" y2="32.1" stroke="#fdfdfd" stroke-width="1.2"/>
<line x1="89.1" y1="156.6" x2="107.6" y2="163.3" stroke="#fdfdfd" stroke-width="1.2"/>
<line x1="101.3" y1="74.9" x2="101.3" y2="88.8" stroke="#fdfdfd" stroke-width="1.2"/>
<line x1="395.4" y1="167.1" x2="403.7" y2="167.1" stroke="#fdfdfd" stroke-width="1.2"/>
<line x1="360.7" y1="92.6" x2="360.7" y2="111.9" stroke="#fdfdfd" stroke-width="1.2"/>
<line x1="120.9" y1="75.1" x2="128.6" y2="96.2" stroke="#fdfdfd" stroke-width="1.2"/>
<line x1="268.6" y1="149.3" x2="279.0" y2="159.8" stroke="#fdfdfd" stroke-width="1.2"/>
<line x1="105.9" y1="38.6" x2="105.9" y2="64.9" stroke="#fdfdfd" stroke-width="1.2"/>
<line x1="347.7" y1="106.8" x2="357.9" y2="134.8" stroke="#fdfdfd" stroke-width="1.2"/>
<line x1="483.1" y1="140.6" x2="492.6" y2="140.6" stroke="#fdfdfd" stroke-width="1.2"/>
<line x1="364.5" y1="42.9" x2="364.5" y2="52.2" stroke="#fdfdfd" stroke-width="1.2"/>
<line x1="327.3" y1="64.0" x2="343.4" y2="80.1" stroke="#fdfdfd" stroke-width="1.2"/>
<line x1="138.7" y1="40.7" x2="147.2" y2="43.8" stroke="#fdfdfd" stroke-width="1.2"/>
<line x1="91.2" y1="45.2" x2="105.0" y2="45.2" stroke="#fdfdfd" stroke-width="1.2"/>
<line x1="473.2" y1="163.4" x2="483.9" y2="174.1" stroke="#fdfdfd" stroke-width="1.2"/>
<line x1="16.9" y1="148.2" x2="16.9" y2="164.1" stroke="#fdfdfd" stroke-width="1.2"/>
<line x1="0.5" y1="64.1" x2="5.4" y2="50.8" stroke="#fdfdfd" stroke-width="1.2"/>
<line x1="322.8" y1="41.7" x2="332.8" y2="41.7" stroke="#fdfdfd" stroke-width="1.2"/>
<line x1="402.0" y1="24.2" x2="418.7" y2="24.2" stroke="#fdfdfd" stroke-width="1.2"/>
<line x1="147.4" y1="105.8" x2="168.3" y2="105.8" stroke="#fdfdfd" stroke-width="1.2"/>
<line x1="260.4" y1="126.1" x2="268.8" y2="149.4" stroke="#fdfdfd" stroke-width="1.2"/>
<line x1="354.6" y1="83.0" x2="377.1" y2="91.2" stroke="#fdfdfd" stroke-width="1.2"/>
<line x1="316.5" y1="7.4" x2="331.9" y2="22.8" stroke="#fdfdfd" stroke-width="1.2"/>
<line x1="361.1" y1="136.5" x2="361.1" y2="164.5" stroke="#fdfdfd" stroke-width="1.2"/>
<line x1="370.4" y1="95.5" x2="396.6" y2="95.5" stroke="#fdfdfd" stroke-width="1.2"/>
<line x1="287.4" y1="150.0" x2="287.4" y2="159.9" stroke="#fdfdfd" stroke-width="1.2"/>
<line x1="20.6" y1="107.0" x2="36.9" y2="107.0" stroke="#fdfdfd" stroke-width="1.2"/>
<line x1="222.1" y1="8.5" x2="243.9" y2="8.5" stroke="#fdfdfd" stroke-width="1.2"/>
<line x1="334.9" y1="82.2" x2="352.9" y2="82.2" stroke="#fdfdfd" stroke-width="1.2"/>
<line x1="34.5" y1="156.7" x2="41.6" y2="163.7" stroke="#fdfdfd" stroke-width="1.2"/>
<line x1="258.8" y1="125.3" x2="263.4" y2="112.6" stroke="#fdfdfd" stroke-width="1.2"/>
<line x1="36.6" y1="44.6" x2="36.6" y2="57.7" stroke="#fdfdfd" stroke-width="1.2"/>
<line x1="319.8" y1="77.3" x2="323.1" y2="86.4" stroke="#fdfdfd" stroke-width="1.2"/>
<line x1="447.9" y1="48.3" x2="469.5" y2="48.3" stroke="#fdfdfd" stroke-width="1.2"/>
<line x1="316.2" y1="13.0" x2="316.2" y2="28.3" stroke="#fdfdfd" stroke-width="1.2"/>
<line x1="320.6" y1="116.4" x2="320.6" y2="124.7" stroke="#fdfdfd" stroke-width="1.2"/>
<line x1="29.8" y1="45.2" x2="53.1" y2="45.2" stroke="#fdfdfd" stroke-width="1.2"/>
<line x1="332.4" y1="48.9" x2="342.5" y2="59.0" stroke="#fdfdfd" stroke-width="1.2"/>
<line x1="229.2" y1="128.9" x2="238.0" y2="137.6" stroke="#fdfdfd" stroke-width="1.2"/>
<line x1="481.2" y1="157.3" x2="495.6" y2="157.3" stroke="#fdfdfd" stroke-width="1.2"/>
<line x1="37.6" y1="85.1" x2="47.8" y2="57.0" stroke="#fdfdfd" stroke-width="1.2"/>
<line x1="190.3" y1="154.0" x2="190.3" y2="163.6" stroke="#fdfdfd" stroke-width="1.2"/>
<line x1="44.4" y1="125.6" x2="71.6" y2="135.5" stroke="#fdfdfd" stroke-width="1.2"/>
<line x1="65.2" y1="137.8" x2="75.2" y2="147.8" stroke="#fdfdfd" stroke-width="1.2"/>
<line x1="55.4" y1="61.4" x2="64.9" y2="35.3" stroke="#fdfdfd" stroke-width="1.2"/>
<line x1="239.2" y1="4.2" x2="268.1" y2="4.2" stroke="#fdfdfd" stroke-width="1.2"/>
<line x1="335.3" y1="68.1" x2="335.3" y2="85.3" stroke="#fdfdfd" stroke-width="1.2"/>
<line x1="185.0" y1="20.3" x2="192.6" y2="17.6" stroke="#fdfdfd" stroke-width="1.2"/>
<line x1="369.4" y1="141.0" x2="398.0" y2="141.0" stroke="#fdfdfd" stroke-width="1.2"/>
<line x1="96.3" y1="2.0" x2="109.1" y2="6.6" stroke="#fdfdfd" stroke-width="1.2"/>
<line x1="32.0" y1="65.5" x2="47.9" y2="65.5" stroke="#fdfdfd" stroke-width="1.2"/>
<line x1="210.6" y1="46.2" x2="224.8" y2="46.2" stroke="#fdfdfd" stroke-width="1.2"/>
<line x1="25.4" y1="111.2" x2="25.4" y2="124.7" stroke="#fdfdfd" stroke-width="1.2"/>
<line x1="130.7" y1="85.8" x2="130.7" y2="110.9" stroke="#fdfdfd" stroke-width="1.2"/>
<line x1="386.3" y1="71.9" x2="412.2" y2="71.9" stroke="#fdfdfd" stroke-width="1.2"/>
<line x1="310.4" y1="153.5" x2="324.6" y2="167.7" stroke="#fdfdfd" stroke-width="1.2"/>
<line x1="354.0" y1="8.3" x2="360.2" y2="25.2" stroke="#fdfdfd" stroke-width="1.2"/>
<line x1="370.3" y1="108.3" x2="387.9" y2="114.7" stroke="#fdfdfd" stroke-width="1.2"/>
<line x1="448.7" y1="92.4" x2="448.7" y2="110.8" stroke="#fdfdfd" stroke-width="1.2"/>
<line x1="169.1" y1="50.0" x2="185.0" y2="55.8" stroke="#fdfdfd" stroke-width="1.2"/>
<line x1="117.4" y1="81.2" x2="121.1" y2="91.2" stroke="#fdfdfd" stroke-width="1.2"/>
<line x1="316.5" y1="12.6" x2="336.2" y2="32.4" stroke="#fdfdfd" stroke-width="1.2"/>
<line x1="244.6" y1="37.0" x2="272.7" y2="26.7" stroke="#fdfdfd" stroke-width="1.2"/>
<line x1="221.4" y1="23.5" x2="221.4" y2="36.8" stroke="#fdfdfd" stroke-width="1.2"/>
<line x1="85.9" y1="93.4" x2="98.4" y2="88.9" stroke="#fdfdfd" stroke-width="1.2"/>
<line x1="127.1" y1="95.7" x2="151.6" y2="95.7" stroke="#fdfdfd" stroke-width="1.2"/>
<line x1="203.1" y1="69.5" x2="212.0" y2="78.5" stroke="#fdfdfd" stroke-width="1.2"/>
<line x1="133.0" y1="126.4" x2="137.8" y2="113.1" stroke="#fdfdfd" stroke-width="1.2"/>
<line x1="476.1" y1="21.1" x2="490.0" y2="35.0" stroke="#fdfdfd" stroke-width="1.2"/>
<line x1="388.8" y1="142.6" x2="402.8" y2="142.6" stroke="#fdfdfd" stroke-width="1.2"/>
<line x1="122.2" y1="67.2" x2="128.2" y2="50.7" stroke="#fdfdfd" stroke-width="1.2"/>
<line x1="153.5" y1="136.8" x2="164.3" y2="136.8" stroke="#fdfdfd" stroke-width="1.2"/>
<line x1="209.2" y1="128.3" x2="219.2" y2="100.8" stroke="#fdfdfd" stroke-width="1.2"/>
<line x1="241.0" y1="12.3" x2="260.0" y2="31.3" stroke="#fdfdfd" stroke-width="1.2"/>
<line x1="478.3" y1="41.7" x2="491.3" y2="41.7" stroke="#fdfdfd" stroke-width="1.2"/>
<line x1="74.8" y1="163.3" x2="103.5" y2="163.3" stroke="#fdfdfd" stroke-width="1.2"/>
<line x1="355.1" y1="108.8" x2="358.5" y2="99.5" stroke="#fdfdfd" stroke-width="1.2"/>
<line x1="382.2" y1="0.2" x2="382.2" y2="13.3" stroke="#fdfdfd" stroke-width="1.2"/>
<line x1="452.6" y1="108.4" x2="480.0" y2="118.4" stroke="#fdfdfd" stroke-width="1.2"/>
<line x1="308.2" y1="88.7" x2="316.2" y2="110.7" stroke="#fdfdfd" stroke-width="1.2"/>
<line x1="55.2" y1="11.8" x2="75.5" y2="32.2" stroke="#fdfdfd" stroke-width="1.2"/>
<line x1="94.3" y1="43.8" x2="102.5" y2="43.8" stroke="#fdfdfd" stroke-width="1.2"/>
<line x1="148.3" y1="77.4" x2="169.2" y2="69.8" stroke="#fdfdfd" stroke-width="1.2"/>
<line x1="434.8" y1="79.9" x2="434.8" y2="99.9" stroke="#fdfdfd" stroke-width="1.2"/>
<line x1="14.4" y1="69.2" x2="23.1" y2="72.3" stroke="#fdfdfd" stroke-width="1.2"/>
<line x1="95.5" y1="148.7" x2="98.9" y2="157.8" stroke="#fdfdfd" stroke-width="1.2"/>
<line x1="112.1" y1="71.3" x2="124.3" y2="66.8" stroke="#fdfdfd" stroke-width="1.2"/>
<line x1="16.8" y1="56.8" x2="22.2" y2="71.8" stroke="#fdfdfd" stroke-width="1.2"/>
<line x1="195.0" y1="1.1" x2="217.8" y2="9.4" stroke="#fdfdfd" stroke-width="1.2"/>
<line x1="248.4" y1="34.5" x2="248.4" y2="49.3" stroke="#fdfdfd" stroke-width="1.2"/>
<line x1="403.4" y1="38.8" x2="403.4" y2="52.6" stroke="#fdfdfd" stroke-width="1.2"/>
<line x1="437.6" y1="18.3" x2="444.9" y2="-1.8" stroke="#fdfdfd" stroke-width="1.2"/>
<line x1="441.1" y1="81.5" x2="469.9" y2="81.5" stroke="#fdfdfd" stroke-width="1.2"/>
<line x1="72.0" y1="66.1" x2="72.0" y2="74.6" stroke="#fdfdfd" stroke-width="1.2"/>
<line x1="293.3" y1="69.8" x2="305.3" y2="69.8" stroke="#fdfdfd" stroke-width="1.2"/>
<line x1="221.2" y1="119.6" x2="243.9" y2="111.4" stroke="#fdfdfd" stroke-width="1.2"/>
<line x1="490.8" y1="156.5" x2="502.2" y2="152.3" stroke="#fdfdfd" stroke-width="1.2"/>
<line x1="321.0" y1="88.2" x2="324.0" y2="80.0" stroke="#fdfdfd" stroke-width="1.2"/>
<line x1="326.9" y1="63.6" x2="354.8" y2="53.5" stroke="#fdfdfd" stroke-width="1.2"/>
<line x1="217.7" y1="18.3" x2="231.8" y2="18.3" stroke="#fdfdfd" stroke-width="1.2"/>
<line x1="172.9" y1="160.5" x2="193.3" y2="160.5" stroke="#fdfdfd" stroke-width="1.2"/>
<line x1="373.3" y1="63.9" x2="397.8" y2="72.8" stroke="#fdfdfd" stroke-width="1.2"/>
<line x1="212.8" y1="8.3" x2="217.0" y2="-3.3" stroke="#fdfdfd" stroke-width="1.2"/>
<line x1="266.4" y1="75.0" x2="281.5" y2="69.5" stroke="#fdfdfd" stroke-width="1.2"/>
<line x1="441.3" y1="5.1" x2="445.9" y2="17.7" stroke="#fdfdfd" stroke-width="1.2"/>
<line x1="307.7" y1="68.0" x2="310.7" y2="76.2" stroke="#fdfdfd" stroke-width="1.2"/>
<line x1="30.8" y1="154.6" x2="42.3" y2="158.8" stroke="#fdfdfd" stroke-width="1.2"/>
<line x1="30.9" y1="101.7" x2="44.1" y2="97.0" stroke="#fdfdfd" stroke-width="1.2"/>
<line x1="471.2" y1="103.7" x2="494.1" y2="112.0" stroke="#fdfdfd" stroke-width="1.2"/>
<line x1="339.3" y1="155.3" x2="346.9" y2="158.0" stroke="#fdfdfd" stroke-width="1.2"/>
<line x1="371.8" y1="154.0" x2="380.3" y2="154.0" stroke="#fdfdfd" stroke-width="1.2"/>
<line x1="115.1" y1="79.8" x2="125.0" y2="52.6" stroke="#fdfdfd" stroke-width="1.2"/>
<line x1="190.2" y1="42.2" x2="199.0" y2="66.5" stroke="#fdfdfd" stroke-width="1.2"/>
<line x1="65.3" y1="83.4" x2="90.9" y2="83.4" stroke="#fdfdfd" stroke-width="1.2"/>
<line x1="363.3" y1="138.2" x2="363.3" y2="159.6" stroke="#fdfdfd" stroke-width="1.2"/>
<line x1="161.3" y1="53.7" x2="185.0" y2="45.1" stroke="#fdfdfd" stroke-width="1.2"/>
<line x1="293.1" y1="86.0" x2="301.5" y2="109.1" stroke="#fdfdfd" stroke-width="1.2"/>
<line x1="121.7" y1="10.9" x2="140.3" y2="10.9" stroke="#fdfdfd" stroke-width="1.2"/>
<line x1="268.0" y1="27.0" x2="277.3" y2="52.8" stroke="#fdfdfd" stroke-width="1.2"/>
<line x1="486.0" y1="44.5" x2="498.6" y2="44.5" stroke="#fdfdfd" stroke-width="1.2"/>
<line x1="207.2" y1="166.1" x2="211.2" y2="155.0" stroke="#fdfdfd" stroke-width="1.2"/>
<line x1="65.4" y1="77.4" x2="65.4" y2="101.9" stroke="#fdfdfd" stroke-width="1.2"/>
<line x1="416.7" y1="111.6" x2="441.9" y2="111.6" stroke="#fdfdfd" stroke-width="1.2"/>
<line x1="144.6" y1="46.9" x2="159.8" y2="52.5" stroke="#fdfdfd" stroke-width="1.2"/>
<line x1="363.1" y1="33.5" x2="363.1" y2="45.6" stroke="#fdfdfd" stroke-width="1.2"/>
<line x1="115.9" y1="47.3" x2="115.9" y2="62.4" stroke="#fdfdfd" stroke-width="1.2"/>
<line x1="194.9" y1="166.7" x2="208.7" y2="180.6" stroke="#fdfdfd" stroke-width="1.2"/>
<line x1="319.6" y1="16.9" x2="329.8" y2="-11.1" stroke="#fdfdfd" stroke-width="1.2"/>
<line x1="50.3" y1="79.8" x2="50.3" y2="106.3" stroke="#fdfdfd" stroke-width="1.2"/>
<line x1="449.9" y1="6.8" x2="462.2" y2="11.3" stroke="#fdfdfd" stroke-width="1.2"/>
<line x1="24.8" y1="100.9" x2="24.8" y2="129.3" stroke="#fdfdfd" stroke-width="1.2"/>
<line x1="183.1" y1="145.5" x2="190.4" y2="125.5" stroke="#fdfdfd" stroke-width="1.2"/>
<line x1="381.3" y1="111.7" x2="391.6" y2="111.7" stroke="#fdfdfd" stroke-width="1.2"/>
<line x1="293.3" y1="104.2" x2="293.3" y2="113.0" stroke="#fdfdfd" stroke-width="1.2"/>
<line x1="167.3" y1="7.4" x2="175.6" y2="10.4" stroke="#fdfdfd" stroke-width="1.2"/>
<line x1="360.3" y1="153.5" x2="386.3" y2="153.5" stroke="#fdfdfd" stroke-width="1.2"/>
<line x1="201.2" y1="62.5" x2="210.4" y2="65.8" stroke="#fdfdfd" stroke-width="1.2"/>
<line x1="15.5" y1="83.3" x2="18.7" y2="74.4" stroke="#fdfdfd" stroke-width="1.2"/>
<line x1="49.9" y1="66.4" x2="57.9" y2="74.5" stroke="#fdfdfd" stroke-width="1.2"/>
<line x1="262.7" y1="109.7" x2="270.7" y2="131.6" stroke="#fdfdfd" stroke-width="1.2"/>
<line x1="201.6" y1="47.6" x2="217.8" y2="53.5" stroke="#fdfdfd" stroke-width="1.2"/>
<line x1="25.3" y1="125.2" x2="41.3" y2="119.4" stroke="#fdfdfd" stroke-width="1.2"/>
<line x1="9.0" y1="128.8" x2="29.8" y2="121.2" stroke="#fdfdfd" stroke-width="1.2"/>
<line x1="192.2" y1="68.0" x2="209.8" y2="68.0" stroke="#fdfdfd" stroke-width="1.2"/>
<line x1="77.0" y1="19.1" x2="94.0" y2="19.1" stroke="#fdfdfd" stroke-width="1.2"/>
<line x1="434.4" y1="77.4" x2="434.4" y2="88.3" stroke="#fdfdfd" stroke-width="1.2"/>
<line x1="25.4" y1="23.9" x2="28.8" y2="33.3" stroke="#fdfdfd" stroke-width="1.2"/>
<line x1="306.1" y1="62.3" x2="314.4" y2="70.6" stroke="#fdfdfd" stroke-width="1.2"/>
<line x1="171.2" y1="27.2" x2="171.2" y2="55.5" stroke="#fdfdfd" stroke-width="1.2"/>
<line x1="53.5" y1="82.4" x2="53.5" y2="97.0" stroke="#fdfdfd" stroke-width="1.2"/>
<line x1="411.9" y1="7.3" x2="417.1" y2="-6.7" stroke="#fdfdfd" stroke-width="1.2"/>
<line x1="299.0" y1="106.9" x2="326.9" y2="106.9" stroke="#fdfdfd" stroke-width="1.2"/>
<line x1="305.2" y1="138.5" x2="305.2" y2="160.6" stroke="#fdfdfd" stroke-width="1.2"/>
<line x1="421.4" y1="104.3" x2="421.4" y2="130.6" stroke="#fdfdfd" stroke-width="1.2"/>
<line x1="90.0" y1="36.6" x2="99.8" y2="63.6" stroke="#fdfdfd" stroke-width="1.2"/>
<line x1="77.0" y1="60.3" x2="77.0" y2="73.8" stroke="#fdfdfd" stroke-width="1.2"/>
<line x1="356.6" y1="150.7" x2="384.1" y2="150.7" stroke="#fdfdfd" stroke-width="1.2"/>
<line x1="414.5" y1="112.9" x2="424.5" y2="109.3" stroke="#fdfdfd" stroke-width="1.2"/>
<line x1="295.0" y1="92.4" x2="315.9" y2="100.0" stroke="#fdfdfd" stroke-width="1.2"/>
<line x1="151.6" y1="41.9" x2="159.3" y2="63.0" stroke="#fdfdfd" stroke-width="1.2"/>
<line x1="219.8" y1="73.6" x2="227.9" y2="73.6" stroke="#fdfdfd" stroke-width="1.2"/>
<line x1="485.2" y1="78.2" x2="493.7" y2="54.9" stroke="#fdfdfd" stroke-width="1.2"/>
<line x1="383.7" y1="77.0" x2="383.7" y2="102.8" stroke="#fdfdfd" stroke-width="1.2"/>
<line x1="197.0" y1="11.3" x2="213.4" y2="5.3" stroke="#fdfdfd" stroke-width="1.2"/>
<line x1="45.1" y1="74.3" x2="61.0" y2="90.1" stroke="#fdfdfd" stroke-width="1.2"/>
<line x1="20.0" y1="21.9" x2="43.6" y2="13.3" stroke="#fdfdfd" stroke-width="1.2"/>
<line x1="251.6" y1="9.1" x2="271.2" y2="28.7" stroke="#fdfdfd" stroke-width="1.2"/>
<line x1="321.2" y1="131.8" x2="348.0" y2="131.8" stroke="#fdfdfd" stroke-width="1.2"/>
<line x1="490.1" y1="123.0" x2="502.4" y2="123.0" stroke="#fdfdfd" stroke-width="1.2"/>
<line x1="483.0" y1="82.6" x2="483.0" y2="105.7" stroke="#fdfdfd" stroke-width="1.2"/>
<line x1="354.8" y1="37.1" x2="374.9" y2="29.8" stroke="#fdfdfd" stroke-width="1.2"/>
<line x1="124.1" y1="54.4" x2="150.3" y2="64.0" stroke="#fdfdfd" stroke-width="1.2"/>
<line x1="224.6" y1="42.7" x2="228.9" y2="30.9" stroke="#fdfdfd" stroke-width="1.2"/>
<line x1="129.3" y1="85.0" x2="144.5" y2="79.5" stroke="#fdfdfd" stroke-width="1.2"/>
<line x1="97.9" y1="67.8" x2="119.4" y2="75.6" stroke="#fdfdfd" stroke-width="1.2"/>
<line x1="440.5" y1="28.3" x2="450.4" y2="32.0" stroke="#fdfdfd" stroke-width="1.2"/>
<line x1="261.1" y1="106.9" x2="288.6" y2="96.9" stroke="#fdfdfd" stroke-width="1.2"/>
<line x1="222.9" y1="87.6" x2="236.4" y2="87.6" stroke="#fdfdfd" stroke-width="1.2"/>
<line x1="263.6" y1="143.9" x2="276.6" y2="139.2" stroke="#fdfdfd" stroke-width="1.2"/>
<line x1="487.3" y1="97.0" x2="501.7" y2="91.8" stroke="#fdfdfd" stroke-width="1.2"/>
<line x1="40.0" y1="38.6" x2="54.6" y2="38.6" stroke="#fdfdfd" stroke-width="1.2"/>
<line x1="253.9" y1="52.1" x2="276.6" y2="43.8" stroke="#fdfdfd" stroke-width="1.2"/>
<line x1="367.6" y1="37.2" x2="387.8" y2="44.6" stroke="#fdfdfd" stroke-width="1.2"/>
<line x1="212.7" y1="86.1" x2="223.6" y2="86.1" stroke="#fdfdfd" stroke-width="1.2"/>
<line x1="111.8" y1="109.7" x2="121.0" y2="109.7" stroke="#fdfdfd" stroke-width="1.2"/>
<line x1="279.0" y1="51.0" x2="290.2" y2="62.2" stroke="#fdfdfd" stroke-width="1.2"/>
<line x1="110.3" y1="98.0" x2="110.3" y2="110.5" stroke="#fdfdfd" stroke-width="1.2"/>
<line x1="307.0" y1="79.8" x2="307.0" y2="88.1" stroke="#fdfdfd" stroke-width="1.2"/>
<line x1="394.3" y1="118.9" x2="397.8" y2="109.4" stroke="#fdfdfd" stroke-width="1.2"/>
<line x1="314.0" y1="146.4" x2="329.8" y2="152.1" stroke="#fdfdfd" stroke-width="1.2"/>
<line x1="130.0" y1="1.9" x2="149.5" y2="21.5" stroke="#fdfdfd" stroke-width="1.2"/>
<line x1="292.6" y1="97.2" x2="309.7" y2="114.3" stroke="#fdfdfd" stroke-width="1.2"/>
<line x1="122.3" y1="151.8" x2="131.6" y2="151.8" stroke="#fdfdfd" stroke-width="1.2"/>
<line x1="12.4" y1="31.2" x2="12.4" y2="40.5" stroke="#fdfdfd" stroke-width="1.2"/>
<line x1="383.2" y1="2.1" x2="399.1" y2="17.9" stroke="#fdfdfd" stroke-width="1.2"/>
<line x1="97.1" y1="69.4" x2="112.2" y2="84.5" stroke="#fdfdfd" stroke-width="1.2"/>
<line x1="249.4" y1="107.8" x2="249.4" y2="127.0" stroke="#fdfdfd" stroke-width="1.2"/>
<line x1="31.4" y1="105.2" x2="39.5" y2="82.9" stroke="#fdfdfd" stroke-width="1.2"/>
<line x1="3.1" y1="141.9" x2="6.5" y2="132.7" stroke="#fdfdfd" stroke-width="1.2"/>
<line x1="322.5" y1="29.5" x2="336.3" y2="29.5" stroke="#fdfdfd" stroke-width="1.2"/>
<line x1="316.9" y1="20.7" x2="339.1" y2="28.8" stroke="#fdfdfd" stroke-width="1.2"/>
<line x1="130.9" y1="93.0" x2="138.8" y2="114.7" stroke="#fdfdfd" stroke-width="1.2"/>
<line x1="451.3" y1="163.3" x2="472.1" y2="170.8" stroke="#fdfdfd" stroke-width="1.2"/>
<line x1="474.8" y1="36.5" x2="480.7" y2="42.3" stroke="#fdfdfd" stroke-width="1.2"/>
<line x1="128.1" y1="39.7" x2="128.1" y2="68.4" stroke="#fdfdfd" stroke-width="1.2"/>
<line x1="367.1" y1="54.9" x2="372.3" y2="69.2" stroke="#fdfdfd" stroke-width="1.2"/>
<line x1="117.7" y1="152.5" x2="130.6" y2="165.4" stroke="#fdfdfd" stroke-width="1.2"/>
<line x1="413.1" y1="117.2" x2="430.8" y2="117.2" stroke="#fdfdfd" stroke-width="1.2"/>
<line x1="356.5" y1="95.8" x2="380.3" y2="104.5" stroke="#fdfdfd" stroke-width="1.2"/>
<line x1="192.6" y1="98.3" x2="192.6" y2="109.5" stroke="#fdfdfd" stroke-width="1.2"/>
<line x1="13.2" y1="17.9" x2="13.2" y2="33.5" stroke="#fdfdfd" stroke-width="1.2"/>
<line x1="69.8" y1="4.8" x2="80.8" y2="4.8" stroke="#fdfdfd" stroke-width="1.2"/>
<line x1="316.6" y1="7.2" x2="340.8" y2="7.2" stroke="#fdfdfd" stroke-width="1.2"/>
<line x1="32.4" y1="99.2" x2="44.0" y2="95.0" stroke="#fdfdfd" stroke-width="1.2"/>
<line x1="469.6" y1="89.7" x2="497.0" y2="89.7" stroke="#fdfdfd" stroke-width="1.2"/>
<line x1="371.8" y1="119.5" x2="375.4" y2="129.2" stroke="#fdfdfd" stroke-width="1.2"/>
<line x1="101.2" y1="18.8" x2="130.1" y2="18.8" stroke="#fdfdfd" stroke-width="1.2"/>
<line x1="448.3" y1="126.6" x2="474.4" y2="126.6" stroke="#fdfdfd" stroke-width="1.2"/>
<line x1="310.7" y1="48.3" x2="321.6" y2="48.3" stroke="#fdfdfd" stroke-width="1.2"/>
<line x1="389.6" y1="108.6" x2="403.8" y2="113.7" stroke="#fdfdfd" stroke-width="1.2"/>
<line x1="208.5" y1="3.5" x2="235.2" y2="13.2" stroke="#fdfdfd" stroke-width="1.2"/>
<line x1="23.8" y1="127.7" x2="47.2" y2="119.1" stroke="#fdfdfd" stroke-width="1.2"/>
<line x1="296.2" y1="80.0" x2="316.5" y2="87.4" stroke="#fdfdfd" stroke-width="1.2"/>
<line x1="15.2" y1="69.4" x2="21.9" y2="87.6" stroke="#fdfdfd" stroke-width="1.2"/>
<line x1="48.4" y1="78.8" x2="68.2" y2="78.8" stroke="#fdfdfd" stroke-width="1.2"/>
<line x1="106.6" y1="144.9" x2="127.2" y2="144.9" stroke="#fdfdfd" stroke-width="1.2"/>
<line x1="141.3" y1="73.3" x2="150.1" y2="82.1" stroke="#fdfdfd" stroke-width="1.2"/>
<line x1="375.0" y1="164.3" x2="390.6" y2="164.3" stroke="#fdfdfd" stroke-width="1.2"/>
<line x1="47.1" y1="116.8" x2="47.1" y2="146.1" stroke="#fdfdfd" stroke-width="1.2"/>
<line x1="291.5" y1="160.8" x2="301.2" y2="170.5" stroke="#fdfdfd" stroke-width="1.2"/>
<line x1="464.4" y1="47.7" x2="464.4" y2="76.3" stroke="#fdfdfd" stroke-width="1.2"/>
<line x1="113.9" y1="27.9" x2="132.7" y2="27.9" stroke="#fdfdfd" stroke-width="1.2"/>
<line x1="487.6" y1="94.3" x2="509.4" y2="94.3" stroke="#fdfdfd" stroke-width="1.2"/>
<line x1="175.0" y1="67.4" x2="184.4" y2="93.4" stroke="#fdfdfd" stroke-width="1.2"/>
<line x1="366.6" y1="70.9" x2="382.8" y2="70.9" stroke="#fdfdfd" stroke-width="1.2"/>
<line x1="149.1" y1="71.9" x2="162.6" y2="85.4" stroke="#fdfdfd" stroke-width="1.2"/>
<line x1="186.6" y1="148.5" x2="186.6" y2="177.3" stroke="#fdfdfd" stroke-width="1.2"/>
<line x1="62.4" y1="99.8" x2="78.1" y2="99.8" stroke="#fdfdfd" stroke-width="1.2"/>
<line x1="160.7" y1="26.1" x2="168.4" y2="4.9" stroke="#fdfdfd" stroke-width="1.2"/>
<line x1="365.1" y1="28.5" x2="373.0" y2="6.7" stroke="#fdfdfd" stroke-width="1.2"/>
<line x1="126.5" y1="38.8" x2="143.6" y2="32.6" stroke="#fdfdfd" stroke-width="1.2"/>
<line x1="435.5" y1="40.0" x2="435.5" y2="53.9" stroke="#fdfdfd" stroke-width="1.2"/>
<line x1="371.3" y1="138.9" x2="371.3" y2="162.8" stroke="#fdfdfd" stroke-width="1.2"/>
<line x1="479.6" y1="121.5" x2="490.7" y2="132.6" stroke="#fdfdfd" stroke-width="1.2"/>
<line x1="116.2" y1="160.6" x2="143.9" y2="170.6" stroke="#fdfdfd" stroke-width="1.2"/>
<line x1="358.5" y1="17.1" x2="370.8" y2="17.1" stroke="#fdfdfd" stroke-width="1.2"/>
<line x1="74.3" y1="24.9" x2="96.9" y2="33.2" stroke="#fdfdfd" stroke-width="1.2"/>
<line x1="214.0" y1="33.0" x2="228.2" y2="33.0" stroke="#fdfdfd" stroke-width="1.2"/>
<line x1="435.5" y1="77.9" x2="452.3" y2="77.9" stroke="#fdfdfd" stroke-width="1.2"/>
<line x1="389.2" y1="116.5" x2="410.1" y2="137.4" stroke="#fdfdfd" stroke-width="1.2"/>
<line x1="145.7" y1="3.7" x2="165.7" y2="11.0" stroke="#fdfdfd" stroke-width="1.2"/>
<line x1="199.1" y1="124.5" x2="207.1" y2="146.5" stroke="#fdfdfd" stroke-width="1.2"/>
<line x1="289.0" y1="108.7" x2="289.0" y2="131.4" stroke="#fdfdfd" stroke-width="1.2"/>
<line x1="321.0" y1="147.4" x2="321.0" y2="170.4" stroke="#fdfdfd" stroke-width="1.2"/>
<line x1="315.6" y1="76.3" x2="328.5" y2="71.6" stroke="#fdfdfd" stroke-width="1.2"/>
<line x1="344.7" y1="150.3" x2="344.7" y2="175.5" stroke="#fdfdfd" stroke-width="1.2"/>
<line x1="350.9" y1="105.8" x2="375.9" y2="114.9" stroke="#fdfdfd" stroke-width="1.2"/>
<line x1="237.5" y1="3.3" x2="244.1" y2="21.5" stroke="#fdfdfd" stroke-width="1.2"/>
<line x1="325.3" y1="146.7" x2="348.9" y2="138.1" stroke="#fdfdfd" stroke-width="1.2"/>
<line x1="191.2" y1="82.3" x2="200.1" y2="82.3" stroke="#fdfdfd" stroke-width="1.2"/>
<line x1="267.3" y1="27.0" x2="267.3" y2="46.4" stroke="#fdfdfd" stroke-width="1.2"/>
<line x1="49.7" y1="96.5" x2="58.6" y2="105.4" stroke="#fdfdfd" stroke-width="1.2"/>
<line x1="234.1" y1="2.7" x2="252.4" y2="-4.0" stroke="#fdfdfd" stroke-width="1.2"/>
<line x1="201.9" y1="159.3" x2="201.9" y2="189.0" stroke="#fdfdfd" stroke-width="1.2"/>
<line x1="90.4" y1="86.3" x2="114.5" y2="86.3" stroke="#fdfdfd" stroke-width="1.2"/>
<line x1="302.1" y1="107.1" x2="315.3" y2="111.9" stroke="#fdfdfd" stroke-width="1.2"/>
<line x1="196.6" y1="2.2" x2="206.3" y2="28.7" stroke="#fdfdfd" stroke-width="1.2"/>
<line x1="309.3" y1="113.4" x2="319.0" y2="116.9" stroke="#fdfdfd" stroke-width="1.2"/>
<line x1="149.3" y1="67.3" x2="170.1" y2="88.1" stroke="#fdfdfd" stroke-width="1.2"/>
<line x1="489.2" y1="161.4" x2="493.5" y2="149.5" stroke="#fdfdfd" stroke-width="1.2"/>
<line x1="63.6" y1="130.5" x2="63.6" y2="148.8" stroke="#fdfdfd" stroke-width="1.2"/>
<line x1="276.5" y1="38.0" x2="276.5" y2="53.7" stroke="#fdfdfd" stroke-width="1.2"/>
<line x1="314.3" y1="137.5" x2="320.5" y2="154.7" stroke="#fdfdfd" stroke-width="1.2"/>
<line x1="144.8" y1="92.1" x2="144.8" y2="117.3" stroke="#fdfdfd" stroke-width="1.2"/>
<line x1="230.9" y1="131.6" x2="230.9" y2="145.5" stroke="#fdfdfd" stroke-width="1.2"/>
<line x1="185.1" y1="42.6" x2="192.9" y2="64.1" stroke="#fdfdfd" stroke-width="1.2"/>
<line x1="236.9" y1="135.3" x2="251.9" y2="140.7" stroke="#fdfdfd" stroke-width="1.2"/>
<line x1="322.0" y1="53.8" x2="327.9" y2="37.4" stroke="#fdfdfd" stroke-width="1.2"/>
<line x1="313.6" y1="110.8" x2="324.2" y2="106.9" stroke="#fdfdfd" stroke-width="1.2"/>
<line x1="149.2" y1="64.7" x2="175.4" y2="64.7" stroke="#fdfdfd" stroke-width="1.2"/>
<line x1="445.7" y1="131.7" x2="445.7" y2="151.4" stroke="#fdfdfd" stroke-width="1.2"/>
<line x1="169.8" y1="97.9" x2="182.4" y2="97.9" stroke="#fdfdfd" stroke-width="1.2"/>
<line x1="35.4" y1="49.2" x2="56.2" y2="49.2" stroke="#fdfdfd" stroke-width="1.2"/>
<line x1="420.3" y1="31.2" x2="425.6" y2="16.5" stroke="#fdfdfd" stroke-width="1.2"/>
<line x1="75.1" y1="151.9" x2="83.4" y2="160.2" stroke="#fdfdfd" stroke-width="1.2"/>
<line x1="438.4" y1="102.2" x2="461.1" y2="102.2" stroke="#fdfdfd" stroke-width="1.2"/>
<line x1="439.8" y1="132.4" x2="451.4" y2="136.6" stroke="#fdfdfd" stroke-width="1.2"/>
<line x1="340.9" y1="89.2" x2="348.6" y2="67.8" stroke="#fdfdfd" stroke-width="1.2"/>
<line x1="57.6" y1="19.9" x2="62.1" y2="32.3" stroke="#fdfdfd" stroke-width="1.2"/>
<line x1="68.6" y1="82.8" x2="87.2" y2="82.8" stroke="#fdfdfd" stroke-width="1.2"/>
<line x1="445.5" y1="117.7" x2="445.5" y2="136.6" stroke="#fdfdfd" stroke-width="1.2"/>
<line x1="265.5" y1="145.0" x2="277.0" y2="145.0" stroke="#fdfdfd" stroke-width="1.2"/>
<line x1="157.8" y1="116.9" x2="165.5" y2="95.6" stroke="#fdfdfd" stroke-width="1.2"/>
<line x1="413.6" y1="63.0" x2="423.8" y2="91.2" stroke="#fdfdfd" stroke-width="1.2"/>
<line x1="332.6" y1="30.3" x2="353.2" y2="22.8" stroke="#fdfdfd" stroke-width="1.2"/>
<line x1="14.0" y1="102.4" x2="38.3" y2="93.6" stroke="#fdfdfd" stroke-width="1.2"/>
<line x1="46.2" y1="81.3" x2="46.2" y2="90.1" stroke="#fdfdfd" stroke-width="1.2"/>
<line x1="353.3" y1="105.0" x2="362.8" y2="101.6" stroke="#fdfdfd" stroke-width="1.2"/>
<line x1="324.2" y1="57.3" x2="338.5" y2="71.6" stroke="#fdfdfd" stroke-width="1.2"/>
<line x1="448.9" y1="47.7" x2="465.1" y2="41.8" stroke="#fdfdfd" stroke-width="1.2"/>
<line x1="272.6" y1="138.9" x2="287.4" y2="144.3" stroke="#fdfdfd" stroke-width="1.2"/>
<line x1="242.9" y1="56.1" x2="268.5" y2="65.4" stroke="#fdfdfd" stroke-width="1.2"/>
<line x1="169.6" y1="34.2" x2="178.3" y2="10.3" stroke="#fdfdfd" stroke-width="1.2"/>
<line x1="162.8" y1="53.3" x2="173.0" y2="57.0" stroke="#fdfdfd" stroke-width="1.2"/>
<line x1="478.6" y1="14.7" x2="495.4" y2="14.7" stroke="#fdfdfd" stroke-width="1.2"/>
<line x1="272.7" y1="68.2" x2="289.5" y2="68.2" stroke="#fdfdfd" stroke-width="1.2"/>
<line x1="53.4" y1="7.8" x2="60.7" y2="-12.3" stroke="#fdfdfd" stroke-width="1.2"/>
<line x1="323.7" y1="132.6" x2="338.9" y2="147.7" stroke="#fdfdfd" stroke-width="1.2"/>
<line x1="303.4" y1="105.3" x2="316.1" y2="105.3" stroke="#fdfdfd" stroke-width="1.2"/>
<line x1="328.2" y1="76.9" x2="328.2" y2="87.2" stroke="#fdfdfd" stroke-width="1.2"/>
<line x1="89.2" y1="6.2" x2="117.3" y2="6.2" stroke="#fdfdfd" stroke-width="1.2"/>
<line x1="322.6" y1="62.0" x2="322.6" y2="87.3" stroke="#fdfdfd" stroke-width="1.2"/>
<line x1="276.6" y1="43.3" x2="287.9" y2="47.5" stroke="#fdfdfd" stroke-width="1.2"/>
<line x1="16.8" y1="3.4" x2="35.8" y2="3.4" stroke="#fdfdfd" stroke-width="1.2"/>
<line x1="256.9" y1="138.6" x2="264.0" y2="158.0" stroke="#fdfdfd" stroke-width="1.2"/>
<line x1="452.0" y1="75.0" x2="474.9" y2="75.0" stroke="#fdfdfd" stroke-width="1.2"/>
<line x1="292.2" y1="166.8" x2="292.2" y2="185.3" stroke="#fdfdfd" stroke-width="1.2"/>
<line x1="202.9" y1="17.1" x2="207.2" y2="5.2" stroke="#fdfdfd" stroke-width="1.2"/>
<line x1="74.7" y1="2.6" x2="82.9" y2="2.6" stroke="#fdfdfd" stroke-width="1.2"/>
<line x1="329.3" y1="165.8" x2="342.1" y2="165.8" stroke="#fdfdfd" stroke-width="1.2"/>
<line x1="59.7" y1="79.4" x2="82.1" y2="87.5" stroke="#fdfdfd" stroke-width="1.2"/>
<line x1="119.2" y1="123.2" x2="119.2" y2="151.5" stroke="#fdfdfd" stroke-width="1.2"/>
<line x1="180.0" y1="125.5" x2="180.0" y2="149.6" stroke="#fdfdfd" stroke-width="1.2"/>
<line x1="41.5" y1="105.6" x2="47.7" y2="88.6" stroke="#fdfdfd" stroke-width="1.2"/>
<line x1="458.7" y1="42.7" x2="482.5" y2="42.7" stroke="#fdfdfd" stroke-width="1.2"/>
<line x1="5.6" y1="2.5" x2="22.2" y2="2.5" stroke="#fdfdfd" stroke-width="1.2"/>
<line x1="153.7" y1="100.8" x2="161.1" y2="80.7" stroke="#fdfdfd" stroke-width="1.2"/>
<line x1="155.6" y1="159.4" x2="161.9" y2="142.2" stroke="#fdfdfd" stroke-width="1.2"/>
<line x1="81.9" y1="162.3" x2="97.9" y2="162.3" stroke="#fdfdfd" stroke-width="1.2"/>
<line x1="317.3" y1="105.8" x2="323.6" y2="123.2" stroke="#fdfdfd" stroke-width="1.2"/>
<line x1="382.8" y1="76.1" x2="406.6" y2="84.7" stroke="#fdfdfd" stroke-width="1.2"/>
<line x1="278.9" y1="49.1" x2="300.6" y2="49.1" stroke="#fdfdfd" stroke-width="1.2"/>
<line x1="320.3" y1="134.7" x2="345.8" y2="125.4" stroke="#fdfdfd" stroke-width="1.2"/>
<line x1="357.0" y1="2.6" x2="357.0" y2="23.8" stroke="#fdfdfd" stroke-width="1.2"/>
<line x1="151.8" y1="72.0" x2="151.8" y2="88.3" stroke="#fdfdfd" stroke-width="1.2"/>
<line x1="336.9" y1="101.1" x2="336.9" y2="126.9" stroke="#fdfdfd" stroke-width="1.2"/>
<line x1="139.4" y1="0.3" x2="152.4" y2="5.0" stroke="#fdfdfd" stroke-width="1.2"/>
<line x1="77.4" y1="154.7" x2="91.7" y2="154.7" stroke="#fdfdfd" stroke-width="1.2"/>
<line x1="69.2" y1="149.6" x2="69.2" y2="163.6" stroke="#fdfdfd" stroke-width="1.2"/>
<line x1="418.8" y1="135.6" x2="424.1" y2="120.9" stroke="#fdfdfd" stroke-width="1.2"/>
<line x1="41.9" y1="93.0" x2="46.1" y2="104.7" stroke="#fdfdfd" stroke-width="1.2"/>
<line x1="369.1" y1="156.5" x2="369.1" y2="171.3" stroke="#fdfdfd" stroke-width="1.2"/>
<line x1="28.3" y1="66.4" x2="28.3" y2="94.8" stroke="#fdfdfd" stroke-width="1.2"/>
<line x1="288.5" y1="1.6" x2="294.7" y2="18.6" stroke="#fdfdfd" stroke-width="1.2"/>
<line x1="43.1" y1="135.5" x2="56.3" y2="135.5" stroke="#fdfdfd" stroke-width="1.2"/>
<line x1="285.2" y1="150.7" x2="295.8" y2="161.3" stroke="#fdfdfd" stroke-width="1.2"/>
<line x1="249.0" y1="33.9" x2="249.0" y2="46.1" stroke="#fdfdfd" stroke-width="1.2"/>
<line x1="88.9" y1="117.8" x2="108.4" y2="110.7" stroke="#fdfdfd" stroke-width="1.2"/>
<line x1="176.6" y1="131.0" x2="176.6" y2="144.4" stroke="#fdfdfd" stroke-width="1.2"/>
<line x1="453.9" y1="82.9" x2="470.1" y2="82.9" stroke="#fdfdfd" stroke-width="1.2"/>
<line x1="228.0" y1="13.7" x2="247.9" y2="6.5" stroke="#fdfdfd" stroke-width="1.2"/>
<line x1="169.7" y1="87.3" x2="179.8" y2="87.3" stroke="#fdfdfd" stroke-width="1.2"/>
<line x1="100.7" y1="146.3" x2="107.8" y2="126.6" stroke="#fdfdfd" stroke-width="1.2"/>
<line x1="105.1" y1="155.5" x2="121.4" y2="161.4" stroke="#fdfdfd" stroke-width="1.2"/>
<line x1="465.7" y1="128.9" x2="465.7" y2="142.5" stroke="#fdfdfd" stroke-width="1.2"/>
<line x1="18.6" y1="33.8" x2="18.6" y2="50.1" stroke="#fdfdfd" stroke-width="1.2"/>
<line x1="13.5" y1="5.8" x2="39.1" y2="-3.4" stroke="#fdfdfd" stroke-width="1.2"/>
<line x1="225.5" y1="159.1" x2="252.5" y2="159.1" stroke="#fdfdfd" stroke-width="1.2"/>
<line x1="314.8" y1="154.9" x2="328.5" y2="154.9" stroke="#fdfdfd" stroke-width="1.2"/>
<line x1="277.7" y1="107.6" x2="289.5" y2="119.4" stroke="#fdfdfd" stroke-width="1.2"/>
<line x1="220.6" y1="26.8" x2="220.6" y2="56.7" stroke="#fdfdfd" stroke-width="1.2"/>
<line x1="109.1" y1="6.5" x2="136.1" y2="16.3" stroke="#fdfdfd" stroke-width="1.2"/>
<line x1="29.2" y1="92.9" x2="55.6" y2="92.9" stroke="#fdfdfd" stroke-width="1.2"/>
<line x1="23.1" y1="132.1" x2="26.3" y2="123.4" stroke="#fdfdfd" stroke-width="1.2"/>
<line x1="71.2" y1="126.8" x2="71.2" y2="149.7" stroke="#fdfdfd" stroke-width="1.2"/>
<line x1="147.0" y1="99.4" x2="165.4" y2="99.4" stroke="#fdfdfd" stroke-width="1.2"/>
<line x1="182.9" y1="65.5" x2="200.3" y2="59.2" stroke="#fdfdfd" stroke-width="1.2"/>
<line x1="82.9" y1="40.1" x2="82.9" y2="68.2" stroke="#fdfdfd" stroke-width="1.2"/>
<line x1="438.9" y1="78.6" x2="438.9" y2="104.2" stroke="#fdfdfd" stroke-width="1.2"/>
<line x1="77.2" y1="139.9" x2="105.8" y2="139.9" stroke="#fdfdfd" stroke-width="1.2"/>
<line x1="426.4" y1="149.3" x2="426.4" y2="174.4" stroke="#fdfdfd" stroke-width="1.2"/>
<line x1="471.3" y1="155.6" x2="480.4" y2="180.5" stroke="#fdfdfd" stroke-width="1.2"/>
<line x1="309.2" y1="76.0" x2="323.3" y2="70.8" stroke="#fdfdfd" stroke-width="1.2"/>
<line x1="115.1" y1="19.4" x2="125.5" y2="15.6" stroke="#fdfdfd" stroke-width="1.2"/>
<line x1="109.1" y1="9.5" x2="116.0" y2="-9.4" stroke="#fdfdfd" stroke-width="1.2"/>
<line x1="71.2" y1="146.3" x2="87.4" y2="152.2" stroke="#fdfdfd" stroke-width="1.2"/>
<line x1="121.4" y1="4.3" x2="135.8" y2="9.5" stroke="#fdfdfd" stroke-width="1.2"/>
<line x1="82.6" y1="82.5" x2="99.5" y2="76.3" stroke="#fdfdfd" stroke-width="1.2"/>
<line x1="237.4" y1="25.8" x2="243.9" y2="32.3" stroke="#fdfdfd" stroke-width="1.2"/>
<line x1="440.4" y1="112.3" x2="440.4" y2="132.6" stroke="#fdfdfd" stroke-width="1.2"/>
<line x1="411.0" y1="20.0" x2="411.0" y2="49.4" stroke="#fdfdfd" stroke-width="1.2"/>
<line x1="212.6" y1="43.9" x2="212.6" y2="72.3" stroke="#fdfdfd" stroke-width="1.2"/>
<line x1="48.0" y1="48.6" x2="48.0" y2="57.9" stroke="#fdfdfd" stroke-width="1.2"/>
<line x1="357.4" y1="49.3" x2="375.2" y2="49.3" stroke="#fdfdfd" stroke-width="1.2"/>
<line x1="249.8" y1="85.8" x2="252.6" y2="78.3" stroke="#fdfdfd" stroke-width="1.2"/>
<line x1="409.5" y1="88.5" x2="409.5" y2="104.4" stroke="#fdfdfd" stroke-width="1.2"/>
<line x1="19.9" y1="68.7" x2="39.3" y2="75.7" stroke="#fdfdfd" stroke-width="1.2"/>
<line x1="67.9" y1="30.3" x2="67.9" y2="53.9" stroke="#fdfdfd" stroke-width="1.2"/>
<line x1="96.8" y1="13.3" x2="124.3" y2="13.3" stroke="#fdfdfd" stroke-width="1.2"/>
<line x1="359.6" y1="127.9" x2="359.6" y2="140.4" stroke="#fdfdfd" stroke-width="1.2"/>
<line x1="301.3" y1="118.9" x2="301.3" y2="139.7" stroke="#fdfdfd" stroke-width="1.2"/>
<line x1="99.5" y1="11.0" x2="111.5" y2="23.0" stroke="#fdfdfd" stroke-width="1.2"/>
<line x1="355.1" y1="9.3" x2="369.5" y2="4.0" stroke="#fdfdfd" stroke-width="1.2"/>
<line x1="414.2" y1="145.2" x2="417.6" y2="135.9" stroke="#fdfdfd" stroke-width="1.2"/>
<line x1="201.5" y1="128.2" x2="201.5" y2="155.4" stroke="#fdfdfd" stroke-width="1.2"/>
<line x1="131.0" y1="31.3" x2="139.3" y2="28.2" stroke="#fdfdfd" stroke-width="1.2"/>
<line x1="345.5" y1="96.6" x2="361.3" y2="96.6" stroke="#fdfdfd" stroke-width="1.2"/>
<line x1="458.6" y1="162.7" x2="469.3" y2="162.7" stroke="#fdfdfd" stroke-width="1.2"/>
<line x1="351.6" y1="137.2" x2="375.2" y2="128.6" stroke="#fdfdfd" stroke-width="1.2"/>
<line x1="427.1" y1="96.8" x2="441.5" y2="96.8" stroke="#fdfdfd" stroke-width="1.2"/>
<line x1="53.0" y1="122.8" x2="59.6" y2="104.7" stroke="#fdfdfd" stroke-width="1.2"/>
<line x1="261.0" y1="90.3" x2="274.4" y2="90.3" stroke="#fdfdfd" stroke-width="1.2"/>
<line x1="43.6" y1="104.0" x2="43.6" y2="114.3" stroke="#fdfdfd" stroke-width="1.2"/>
<line x1="123.2" y1="137.3" x2="131.7" y2="137.3" stroke="#fdfdfd" stroke-width="1.2"/>
<line x1="455.7" y1="124.1" x2="463.6" y2="127.0" stroke="#fdfdfd" stroke-width="1.2"/>
<line x1="294.9" y1="96.8" x2="304.3" y2="106.2" stroke="#fdfdfd" stroke-width="1.2"/>
<line x1="218.6" y1="58.9" x2="242.3" y2="58.9" stroke="#fdfdfd" stroke-width="1.2"/>
<line x1="22.2" y1="20.7" x2="29.4" y2="1.0" stroke="#fdfdfd" stroke-width="1.2"/>
<line x1="374.7" y1="18.5" x2="391.6" y2="18.5" stroke="#fdfdfd" stroke-width="1.2"/>
<line x1="67.4" y1="99.4" x2="67.4" y2="110.7" stroke="#fdfdfd" stroke-width="1.2"/>
<line x1="281.8" y1="125.4" x2="281.8" y2="154.3" stroke="#fdfdfd" stroke-width="1.2"/>
<line x1="9.1" y1="106.7" x2="16.3" y2="126.5" stroke="#fdfdfd" stroke-width="1.2"/>
<line x1="296.6" y1="6.1" x2="321.7" y2="6.1" stroke="#fdfdfd" stroke-width="1.2"/>
<line x1="166.6" y1="40.4" x2="188.9" y2="32.3" stroke="#fdfdfd" stroke-width="1.2"/>
<line x1="414.8" y1="94.8" x2="439.1" y2="86.0" stroke="#fdfdfd" stroke-width="1.2"/>
<line x1="417.0" y1="9.0" x2="425.0" y2="16.9" stroke="#fdfdfd" stroke-width="1.2"/>
<line x1="334.6" y1="59.4" x2="342.4" y2="80.6" stroke="#fdfdfd" stroke-width="1.2"/>
<line x1="5.7" y1="18.3" x2="5.7" y2="27.8" stroke="#fdfdfd" stroke-width="1.2"/>
<line x1="213.1" y1="84.8" x2="226.0" y2="84.8" stroke="#fdfdfd" stroke-width="1.2"/>
<line x1="207.0" y1="66.7" x2="214.5" y2="46.1" stroke="#fdfdfd" stroke-width="1.2"/>
<line x1="398.2" y1="148.6" x2="406.9" y2="148.6" stroke="#fdfdfd" stroke-width="1.2"/>
<line x1="315.7" y1="44.6" x2="336.2" y2="52.1" stroke="#fdfdfd" stroke-width="1.2"/>
<line x1="396.7" y1="6.0" x2="410.2" y2="6.0" stroke="#fdfdfd" stroke-width="1.2"/>
<line x1="256.0" y1="72.9" x2="270.3" y2="72.9" stroke="#fdfdfd" stroke-width="1.2"/>
<line x1="150.3" y1="108.8" x2="159.6" y2="108.8" stroke="#fdfdfd" stroke-width="1.2"/>
<line x1="471.9" y1="154.7" x2="481.1" y2="158.1" stroke="#fdfdfd" stroke-width="1.2"/>
<line x1="290.4" y1="156.6" x2="294.1" y2="146.5" stroke="#fdfdfd" stroke-width="1.2"/>
<line x1="64.6" y1="49.3" x2="71.7" y2="68.8" stroke="#fdfdfd" stroke-width="1.2"/>
<line x1="134.9" y1="123.6" x2="145.0" y2="133.8" stroke="#fdfdfd" stroke-width="1.2"/>
<line x1="223.4" y1="116.7" x2="223.4" y2="139.0" stroke="#fdfdfd" stroke-width="1.2"/>
<line x1="99.0" y1="119.3" x2="108.4" y2="93.4" stroke="#fdfdfd" stroke-width="1.2"/>
<line x1="149.4" y1="80.3" x2="157.6" y2="83.2" stroke="#fdfdfd" stroke-width="1.2"/>
<line x1="164.2" y1="31.7" x2="175.8" y2="43.3" stroke="#fdfdfd" stroke-width="1.2"/>
<line x1="288.2" y1="2.0" x2="299.0" y2="-2.0" stroke="#fdfdfd" stroke-width="1.2"/>
<line x1="468.4" y1="54.4" x2="486.1" y2="48.0" stroke="#fdfdfd" stroke-width="1.2"/>
<line x1="140.1" y1="165.9" x2="148.8" y2="169.1" stroke="#fdfdfd" stroke-width="1.2"/>
<line x1="10.7" y1="92.6" x2="27.3" y2="86.5" stroke="#fdfdfd" stroke-width="1.2"/>
<line x1="30.5" y1="65.2" x2="35.9" y2="50.3" stroke="#fdfdfd" stroke-width="1.2"/>
<line x1="375.3" y1="87.5" x2="375.3" y2="104.7" stroke="#fdfdfd" stroke-width="1.2"/>
<line x1="328.8" y1="23.6" x2="328.8" y2="45.1" stroke="#fdfdfd" stroke-width="1.2"/>
<line x1="418.2" y1="138.0" x2="425.3" y2="145.1" stroke="#fdfdfd" stroke-width="1.2"/>
<line x1="421.3" y1="154.9" x2="426.0" y2="141.8" stroke="#fdfdfd" stroke-width="1.2"/>
<line x1="310.3" y1="106.2" x2="310.3" y2="123.3" stroke="#fdfdfd" stroke-width="1.2"/>
<line x1="50.9" y1="69.0" x2="65.6" y2="83.7" stroke="#fdfdfd" stroke-width="1.2"/>
<line x1="245.0" y1="161.7" x2="245.0" y2="178.9" stroke="#fdfdfd" stroke-width="1.2"/>
<line x1="385.6" y1="146.6" x2="401.9" y2="146.6" stroke="#fdfdfd" stroke-width="1.2"/>
<line x1="222.5" y1="76.9" x2="236.1" y2="72.0" stroke="#fdfdfd" stroke-width="1.2"/>
<line x1="192.2" y1="93.3" x2="199.8" y2="114.2" stroke="#fdfdfd" stroke-width="1.2"/>
<line x1="3.3" y1="125.3" x2="8.9" y2="109.9" stroke="#fdfdfd" stroke-width="1.2"/>
<line x1="147.6" y1="90.2" x2="147.6" y2="107.8" stroke="#fdfdfd" stroke-width="1.2"/>
<line x1="185.5" y1="39.0" x2="199.7" y2="33.8" stroke="#fdfdfd" stroke-width="1.2"/>
<line x1="414.9" y1="140.8" x2="426.7" y2="136.5" stroke="#fdfdfd" stroke-width="1.2"/>
<line x1="209.8" y1="153.0" x2="218.4" y2="153.0" stroke="#fdfdfd" stroke-width="1.2"/>
<line x1="126.2" y1="150.5" x2="152.8" y2="160.2" stroke="#fdfdfd" stroke-width="1.2"/>
<line x1="380.6" y1="90.5" x2="387.2" y2="108.7" stroke="#fdfdfd" stroke-width="1.2"/>
<line x1="254.5" y1="115.1" x2="260.7" y2="132.2" stroke="#fdfdfd" stroke-width="1.2"/>
<line x1="20.0" y1="113.6" x2="29.9" y2="86.5" stroke="#fdfdfd" stroke-width="1.2"/>
<line x1="332.8" y1="88.2" x2="349.8" y2="88.2" stroke="#fdfdfd" stroke-width="1.2"/>
<line x1="246.4" y1="109.0" x2="246.4" y2="136.3" stroke="#fdfdfd" stroke-width="1.2"/>
<line x1="474.5" y1="81.8" x2="483.0" y2="58.4" stroke="#fdfdfd" stroke-width="1.2"/>
<line x1="442.4" y1="98.7" x2="459.7" y2="116.0" stroke="#fdfdfd" stroke-width="1.2"/>
<line x1="45.4" y1="60.9" x2="73.1" y2="50.8" stroke="#fdfdfd" stroke-width="1.2"/>
<line x1="406.4" y1="86.1" x2="428.8" y2="86.1" stroke="#fdfdfd" stroke-width="1.2"/>
<line x1="145.1" y1="57.7" x2="164.6" y2="77.2" stroke="#fdfdfd" stroke-width="1.2"/>
<line x1="207.1" y1="26.3" x2="231.5" y2="35.2" stroke="#fdfdfd" stroke-width="1.2"/>
<line x1="102.2" y1="150.0" x2="106.3" y2="161.3" stroke="#fdfdfd" stroke-width="1.2"/>
<polyline points="0,15 58,4 94,-1" fill="none" stroke="#b7d6f2" stroke-width="2.2" stroke-linejoin="round" stroke-linecap="round" />
<polyline points="153,-1 156,60 158,111 178,169" fill="none" stroke="#b7d6f2" stroke-width="2.5" stroke-linejoin="round" stroke-linecap="round" />
<polyline points="172,118 226,123 246,123 330,121 378,109 474,99 493,96" fill="none" stroke="#b7d6f2" stroke-width="2.8" stroke-linejoin="round" stroke-linecap="round" />
<polyline points="450,60 470,80 480,120 493,140" fill="none" stroke="#c2dcf4" stroke-width="1.5" stroke-linejoin="round" stroke-linecap="round" />
<polyline points="56,-1 70,50 82,111 106,169" fill="none" stroke="#fbdc9c" stroke-width="4.5" stroke-linejoin="round" stroke-linecap="round" />
<polyline points="-1,153 40,135 77,120 112,112 166,112 208,109 248,86 300,57 310,53 474,55 493,55" fill="none" stroke="#fbdc9c" stroke-width="5.0" stroke-linejoin="round" stroke-linecap="round" />
<polyline points="163,-1 166,81 172,111 185,169" fill="none" stroke="#fbdc9c" stroke-width="4.5" stroke-linejoin="round" stroke-linecap="round" />
<polyline points="111,169 178,152 200,146" fill="none" stroke="#fbdc9c" stroke-width="4.0" stroke-linejoin="round" stroke-linecap="round" />
<polyline points="424,-1 438,53 458,169" fill="none" stroke="#fbdc9c" stroke-width="4.5" stroke-linejoin="round" stroke-linecap="round" />
<polyline points="301,-1 351,169" fill="none" stroke="#d88b8b" stroke-width="0.9" stroke-linejoin="round" stroke-linecap="round" />
<g font-family="Liberation Sans,sans-serif">
<text x="76" y="22" font-size="13.2" fill="#8a8a8a" stroke="#f4f4f4" stroke-width="2" paint-order="stroke" >河南新村</text>
<text x="50" y="46" font-size="13.2" fill="#8a8a8a" stroke="#f4f4f4" stroke-width="2" paint-order="stroke" >小柳新村</text>
<text x="-2" y="36" font-size="12.4" fill="#8a8a8a" stroke="#f4f4f4" stroke-width="2" paint-order="stroke" >屿</text>
<text x="-4" y="102" font-size="12.4" fill="#8a8a8a" stroke="#f4f4f4" stroke-width="2" paint-order="stroke" >内福屿</text>
<text x="3" y="122" font-size="13.2" fill="#8a8a8a" stroke="#f4f4f4" stroke-width="2" paint-order="stroke" >乌山郡</text>
<text x="81" y="121" font-size="12" fill="#555" stroke="#f4f4f4" stroke-width="2" paint-order="stroke" transform="rotate(-12 96 116)">乌涎路</text>
<text x="63" y="149" font-size="13.2" fill="#555" stroke="#f4f4f4" stroke-width="2" paint-order="stroke" >黎明高架桥</text>
<text x="199" y="28" font-size="12.4" fill="#5f8a7c" stroke="#f4f4f4" stroke-width="2" paint-order="stroke" >林则徐小学</text>
<text x="183" y="72" font-size="12.4" fill="#6b7890" stroke="#f4f4f4" stroke-width="2" paint-order="stroke" >乌山历史风貌区</text>
<text x="212" y="107" font-size="12.4" fill="#5f8a7c" stroke="#f4f4f4" stroke-width="2" paint-order="stroke" >黎明湖公园</text>
<text x="234" y="128" font-size="11.5" fill="#555" stroke="#f4f4f4" stroke-width="2" paint-order="stroke" >西洋</text>
<text x="157" y="170" font-size="11.5" fill="#8458b8" stroke="#f4f4f4" stroke-width="2" paint-order="stroke" >白马路瓦科里</text>
<text x="150" y="10" font-size="10.5" fill="#8a8a8a" stroke="#f4f4f4" stroke-width="2" paint-order="stroke" >河</text>
<text x="290" y="8" font-size="11.5" fill="#5f8a7c" stroke="#f4f4f4" stroke-width="2" paint-order="stroke" >延安中学</text>
<text x="292" y="32" font-size="11.5" fill="#555" stroke="#f4f4f4" stroke-width="2" paint-order="stroke" >南门兜</text>
<text x="363" y="21" font-size="11.5" fill="#6b7890" stroke="#f4f4f4" stroke-width="2" paint-order="stroke" >于山风景</text>
<text x="363" y="34" font-size="11.5" fill="#6b7890" stroke="#f4f4f4" stroke-width="2" paint-order="stroke" >名胜公园</text>
<text x="424" y="22" font-size="12" fill="#555" stroke="#f4f4f4" stroke-width="2" paint-order="stroke" >五</text>
<text x="424" y="36" font-size="11.5" fill="#555" stroke="#f4f4f4" stroke-width="2" paint-order="stroke" >路</text>
<text x="459" y="40" font-size="9.5" fill="#555" stroke="#f4f4f4" stroke-width="2" paint-order="stroke" >古田路</text>
<text x="310" y="58" font-size="11.5" fill="#555" stroke="#f4f4f4" stroke-width="2" paint-order="stroke" >南门兜</text>
<text x="372" y="60" font-size="11.5" fill="#555" stroke="#f4f4f4" stroke-width="2" paint-order="stroke" >古田路</text>
<text x="474" y="58" font-size="11.5" fill="#555" stroke="#f4f4f4" stroke-width="2" paint-order="stroke" >水部</text>
<text x="312" y="84" font-size="12" fill="#8458b8" stroke="#f4f4f4" stroke-width="2" paint-order="stroke" >聚春园福州</text>
<text x="325" y="97" font-size="12" fill="#8458b8" stroke="#f4f4f4" stroke-width="2" paint-order="stroke" >大饭店</text>
<text x="405" y="79" font-size="12" fill="#8458b8" stroke="#f4f4f4" stroke-width="2" paint-order="stroke" >正大广场</text>
<text x="407" y="105" font-size="12" fill="#8458b8" stroke="#f4f4f4" stroke-width="2" paint-order="stroke" >福建阳光</text>
<text x="400" y="118" font-size="12" fill="#8458b8" stroke="#f4f4f4" stroke-width="2" paint-order="stroke" >假日大酒店</text>
<text x="328" y="138" font-size="12.4" fill="#8a8a8a" stroke="#f4f4f4" stroke-width="2" paint-order="stroke" >双福花园</text>
<text x="248" y="155" font-size="12" fill="#5f8a7c" stroke="#f4f4f4" stroke-width="2" paint-order="stroke" >福建医科大学</text>
<text x="254" y="167" font-size="11.5" fill="#5f8a7c" stroke="#f4f4f4" stroke-width="2" paint-order="stroke" >(台江校区)</text>
<text x="339" y="168" font-size="10.5" fill="#555" stroke="#f4f4f4" stroke-width="2" paint-order="stroke" >茶亭</text>
<text x="404" y="167" font-size="10.5" fill="#555" stroke="#f4f4f4" stroke-width="2" paint-order="stroke" >群众路</text>
<text x="450" y="150" font-size="12" fill="#555" stroke="#f4f4f4" stroke-width="2" paint-order="stroke" >五</text>
<text x="450" y="163" font-size="11.5" fill="#555" stroke="#f4f4f4" stroke-width="2" paint-order="stroke" >路</text>
</g>
<path d="M242.5,78 A5,5 0 1 1 251.5,78 L247,86 Z" fill="#c46a72"/>
</svg>
</div>
</body>
</html>
